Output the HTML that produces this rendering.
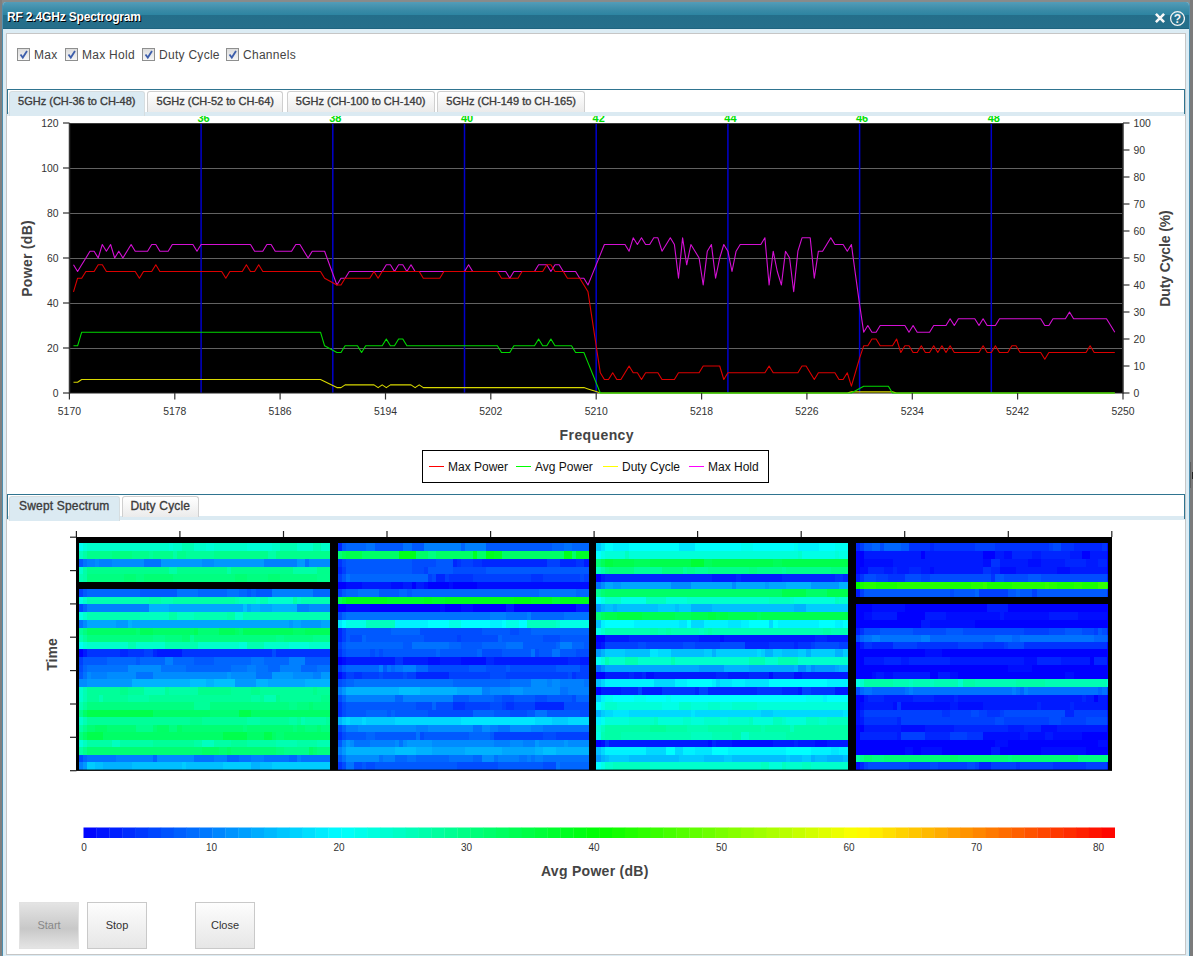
<!DOCTYPE html><html><head><meta charset="utf-8"><style>
*{box-sizing:border-box}
html,body{margin:0;padding:0}
body{width:1196px;height:956px;overflow:hidden;background:#fff;position:relative;font-family:"Liberation Sans",sans-serif}
.abs{position:absolute}
#strTop{left:0;top:0;width:1193px;height:8px;background:#878b8b}
#strL{left:0;top:0;width:2px;height:956px;background:#7f7f7f}
#strR{left:1190px;top:0;width:3px;height:956px;background:#7b7b7b}
#dlg{left:2px;top:2px;width:1188px;height:960px;background:#dcecf4;border-left:1px solid #4d8fb0;border-right:1px solid #4d8fb0;border-radius:4px 4px 0 0;overflow:hidden}
#tbar{left:0;top:0;width:1186px;height:26.5px;background:linear-gradient(#539cb8 0px,#3a8ba7 8px,#2e85a2 12.5px,#246e8a 13px,#266f8b 25.5px,#1f6480 26.5px)}
#ttl{left:4px;top:8px;color:#fff;font-weight:bold;font-size:12px;text-shadow:1px 1px 0 #000;white-space:nowrap;letter-spacing:-0.17px}
#content{left:6px;top:33px;width:1180px;height:922px;background:#fff;border:1px solid #c6c6c6}
.cbx{position:absolute;top:48px;width:13px;height:13px;border:1px solid #8e8f8f;background:linear-gradient(#dcdcdc,#f6f6f6)}
.cbl{position:absolute;top:47.5px;font-size:12px;color:#444;white-space:nowrap;letter-spacing:0.28px}
.tabbar{position:absolute;left:7px;width:1178px;height:25px;border:1px solid #2f7490;border-bottom:none}
.tabstrip{position:absolute;left:7px;width:1178px;height:4px;background:#dbeaf2}
.tab{position:absolute;height:21px;border:1px solid #cfcfcf;border-bottom:none;border-radius:3px 3px 0 0;background:linear-gradient(#ffffff,#ebebeb);font-size:11px;font-weight:normal;-webkit-text-stroke:0.35px #3c3c3c;color:#3c3c3c;white-space:nowrap;padding-top:3px;text-align:center}
.tab.act{background:#dbeaf2;border-color:#d6dde0;height:25px}
.btn{position:absolute;top:902px;width:60px;height:47px;border:1px solid #c9c9c9;background:linear-gradient(#fdfdfd,#e6e6e6);font-size:11px;color:#333;text-align:center;line-height:45px}
.btn.dis{background:linear-gradient(#e4e4e4,#c8c8c8 57%,#e4e4e4);color:#888;border-color:#e2e2e2}
#ch{position:absolute;left:0;top:0}
#ch text{font-family:"Liberation Sans",sans-serif}
.ax{font-size:10.4px;fill:#333}
.cb{font-size:10px;fill:#333}
.chl{font-size:11px;font-weight:bold;fill:#00e000}
.ttl{font-size:14px;font-weight:bold;fill:#444}
.lg{font-size:12px;fill:#111}
</style></head><body><div class="abs" id="strTop"></div><div class="abs" id="strL"></div><div class="abs" id="strR"></div><div class="abs" id="dlg"><div class="abs" id="tbar"><div class="abs" id="ttl">RF 2.4GHz Spectrogram</div><svg class="abs" style="left:1150px;top:7px" width="32" height="20"><path d="M2.9 4.9 L11.1 13.1 M11.1 4.9 L2.9 13.1" stroke="#f6f6f6" stroke-width="2.6"/><circle cx="24.5" cy="9.5" r="6.9" fill="none" stroke="#f2f2f2" stroke-width="1.3"/><text x="24.5" y="14.3" text-anchor="middle" font-family="Liberation Sans" font-weight="bold" font-size="12" fill="#f4f4f4">?</text></svg></div></div><div class="abs" id="content"></div><div class="abs" style="left:1190px;top:462px;width:1px;height:26px;background:#5f5f5f"></div><div class="abs" style="left:1192px;top:472px;width:1px;height:7px;background:#222"></div><div class="cbx" style="left:17px"><svg width="13" height="13" style="position:absolute;left:-1px;top:-1px"><path d="M3.5 6.5 L5.8 9.6 L10 3" fill="none" stroke="#3d5eab" stroke-width="1.8"/></svg></div><div class="cbl" style="left:34px">Max</div><div class="cbx" style="left:65px"><svg width="13" height="13" style="position:absolute;left:-1px;top:-1px"><path d="M3.5 6.5 L5.8 9.6 L10 3" fill="none" stroke="#3d5eab" stroke-width="1.8"/></svg></div><div class="cbl" style="left:82px">Max Hold</div><div class="cbx" style="left:142px"><svg width="13" height="13" style="position:absolute;left:-1px;top:-1px"><path d="M3.5 6.5 L5.8 9.6 L10 3" fill="none" stroke="#3d5eab" stroke-width="1.8"/></svg></div><div class="cbl" style="left:159px">Duty Cycle</div><div class="cbx" style="left:226px"><svg width="13" height="13" style="position:absolute;left:-1px;top:-1px"><path d="M3.5 6.5 L5.8 9.6 L10 3" fill="none" stroke="#3d5eab" stroke-width="1.8"/></svg></div><div class="cbl" style="left:243px">Channels</div><div class="tabstrip" style="top:111.5px"></div><div class="tabbar" style="top:89px"></div><div class="tab act" style="left:9px;top:91px;width:135.5px">5GHz (CH-36 to CH-48)</div><div class="tab" style="left:147.2px;top:91px;width:136.2px">5GHz (CH-52 to CH-64)</div><div class="tab" style="left:286.7px;top:91px;width:147.9px">5GHz (CH-100 to CH-140)</div><div class="tab" style="left:437.3px;top:91px;width:147.7px">5GHz (CH-149 to CH-165)</div><div class="tabstrip" style="top:516.3px"></div><div class="tabbar" style="top:494px"></div><div class="tab act" style="left:9px;top:496px;width:110.6px;font-size:12px;letter-spacing:0.17px;padding-top:2px">Swept Spectrum</div><div class="tab" style="left:122px;top:496px;width:76.6px;font-size:12px;letter-spacing:0.17px;padding-top:2px">Duty Cycle</div><svg id="ch" width="1196" height="956"><clipPath id="clipch"><rect x="60" y="116" width="1000" height="7"/></clipPath><g clip-path="url(#clipch)"><text x="203.6" y="122.3" class="chl" text-anchor="middle">36</text><text x="335.3" y="122.3" class="chl" text-anchor="middle">38</text><text x="467.0" y="122.3" class="chl" text-anchor="middle">40</text><text x="598.7" y="122.3" class="chl" text-anchor="middle">42</text><text x="730.4" y="122.3" class="chl" text-anchor="middle">44</text><text x="862.1" y="122.3" class="chl" text-anchor="middle">46</text><text x="993.8" y="122.3" class="chl" text-anchor="middle">48</text></g><rect x="69" y="123" width="1054" height="270" fill="#000"/><line x1="69" y1="348.5" x2="1122" y2="348.5" stroke="#626262" stroke-width="1"/><line x1="69" y1="303.5" x2="1122" y2="303.5" stroke="#626262" stroke-width="1"/><line x1="69" y1="258.5" x2="1122" y2="258.5" stroke="#626262" stroke-width="1"/><line x1="69" y1="213.5" x2="1122" y2="213.5" stroke="#626262" stroke-width="1"/><line x1="69" y1="168.5" x2="1122" y2="168.5" stroke="#626262" stroke-width="1"/><line x1="201.1" y1="123" x2="201.1" y2="393" stroke="#0000cc" stroke-width="1.5"/><line x1="332.8" y1="123" x2="332.8" y2="393" stroke="#0000cc" stroke-width="1.5"/><line x1="464.5" y1="123" x2="464.5" y2="393" stroke="#0000cc" stroke-width="1.5"/><line x1="596.2" y1="123" x2="596.2" y2="393" stroke="#0000cc" stroke-width="1.5"/><line x1="727.9" y1="123" x2="727.9" y2="393" stroke="#0000cc" stroke-width="1.5"/><line x1="859.6" y1="123" x2="859.6" y2="393" stroke="#0000cc" stroke-width="1.5"/><line x1="991.3" y1="123" x2="991.3" y2="393" stroke="#0000cc" stroke-width="1.5"/><rect x="69" y="123" width="1054" height="1" fill="#3a3a3a"/><line x1="69" y1="393" x2="1123.5" y2="393" stroke="#222" stroke-width="1.2"/><polyline fill="none" stroke="#d8d800" stroke-width="1.1" stroke-linejoin="round" points="73.5,382.2 77.6,382.2 81.7,379.5 85.9,379.5 90.0,379.5 94.1,379.5 98.2,379.5 102.3,379.5 106.4,379.5 110.6,379.5 114.7,379.5 118.8,379.5 122.9,379.5 127.0,379.5 131.1,379.5 135.2,379.5 139.4,379.5 143.5,379.5 147.6,379.5 151.7,379.5 155.8,379.5 159.9,379.5 164.1,379.5 168.2,379.5 172.3,379.5 176.4,379.5 180.5,379.5 184.6,379.5 188.8,379.5 192.9,379.5 197.0,379.5 201.1,379.5 205.2,379.5 209.3,379.5 213.4,379.5 217.6,379.5 221.7,379.5 225.8,379.5 229.9,379.5 234.0,379.5 238.1,379.5 242.3,379.5 246.4,379.5 250.5,379.5 254.6,379.5 258.7,379.5 262.8,379.5 266.9,379.5 271.1,379.5 275.2,379.5 279.3,379.5 283.4,379.5 287.5,379.5 291.6,379.5 295.8,379.5 299.9,379.5 304.0,379.5 308.1,379.5 312.2,379.5 316.3,379.5 320.5,379.5 324.6,381.5 328.7,383.6 332.8,385.6 336.9,387.6 341.0,387.6 345.1,384.9 349.3,384.9 353.4,384.9 357.5,384.9 361.6,384.9 365.7,384.9 369.8,384.9 374.0,384.9 378.1,387.6 382.2,384.9 386.3,387.6 390.4,384.9 394.5,384.9 398.6,384.9 402.8,384.9 406.9,384.9 411.0,384.9 415.1,387.6 419.2,384.9 423.3,387.6 427.5,387.6 431.6,387.6 435.7,387.6 439.8,387.6 443.9,387.6 448.0,387.6 452.2,387.6 456.3,387.6 460.4,387.6 464.5,387.6 468.6,387.6 472.7,387.6 476.8,387.6 481.0,387.6 485.1,387.6 489.2,387.6 493.3,387.6 497.4,387.6 501.5,387.6 505.7,387.6 509.8,387.6 513.9,387.6 518.0,387.6 522.1,387.6 526.2,387.6 530.3,387.6 534.5,387.6 538.6,387.6 542.7,387.6 546.8,387.6 550.9,387.6 555.0,387.6 559.2,387.6 563.3,387.6 567.4,387.6 571.5,387.6 575.6,387.6 579.7,387.6 583.9,387.6 588.0,388.9 592.1,390.3 596.2,391.6 600.3,393.0 604.4,393.0 608.5,393.0 612.7,393.0 616.8,393.0 620.9,393.0 625.0,393.0 629.1,393.0 633.2,393.0 637.4,393.0 641.5,393.0 645.6,393.0 649.7,393.0 653.8,393.0 657.9,393.0 662.0,393.0 666.2,393.0 670.3,393.0 674.4,393.0 678.5,393.0 682.6,393.0 686.7,393.0 690.9,393.0 695.0,393.0 699.1,393.0 703.2,393.0 707.3,393.0 711.4,393.0 715.6,393.0 719.7,393.0 723.8,393.0 727.9,393.0 732.0,393.0 736.1,393.0 740.2,393.0 744.4,393.0 748.5,393.0 752.6,393.0 756.7,393.0 760.8,393.0 764.9,393.0 769.1,393.0 773.2,393.0 777.3,393.0 781.4,393.0 785.5,393.0 789.6,393.0 793.7,393.0 797.9,393.0 802.0,393.0 806.1,393.0 810.2,393.0 814.3,393.0 818.4,393.0 822.6,393.0 826.7,393.0 830.8,393.0 834.9,393.0 839.0,393.0 843.1,393.0 847.3,393.0 851.4,391.9 855.5,391.9 859.6,391.9 863.7,391.9 867.8,391.9 871.9,391.9 876.1,391.9 880.2,391.9 884.3,391.9 888.4,391.9 892.5,391.9 896.6,393.0 900.8,393.0 904.9,393.0 909.0,393.0 913.1,393.0 917.2,393.0 921.3,393.0 925.4,393.0 929.6,393.0 933.7,393.0 937.8,393.0 941.9,393.0 946.0,393.0 950.1,393.0 954.3,393.0 958.4,393.0 962.5,393.0 966.6,393.0 970.7,393.0 974.8,393.0 979.0,393.0 983.1,393.0 987.2,393.0 991.3,393.0 995.4,393.0 999.5,393.0 1003.6,393.0 1007.8,393.0 1011.9,393.0 1016.0,393.0 1020.1,393.0 1024.2,393.0 1028.3,393.0 1032.5,393.0 1036.6,393.0 1040.7,393.0 1044.8,393.0 1048.9,393.0 1053.0,393.0 1057.1,393.0 1061.3,393.0 1065.4,393.0 1069.5,393.0 1073.6,393.0 1077.7,393.0 1081.8,393.0 1086.0,393.0 1090.1,393.0 1094.2,393.0 1098.3,393.0 1102.4,393.0 1106.5,393.0 1110.7,393.0 1114.8,393.0"/><polyline fill="none" stroke="#00d800" stroke-width="1.1" stroke-linejoin="round" points="73.5,345.8 77.6,345.8 81.7,332.2 85.9,332.2 90.0,332.2 94.1,332.2 98.2,332.2 102.3,332.2 106.4,332.2 110.6,332.2 114.7,332.2 118.8,332.2 122.9,332.2 127.0,332.2 131.1,332.2 135.2,332.2 139.4,332.2 143.5,332.2 147.6,332.2 151.7,332.2 155.8,332.2 159.9,332.2 164.1,332.2 168.2,332.2 172.3,332.2 176.4,332.2 180.5,332.2 184.6,332.2 188.8,332.2 192.9,332.2 197.0,332.2 201.1,332.2 205.2,332.2 209.3,332.2 213.4,332.2 217.6,332.2 221.7,332.2 225.8,332.2 229.9,332.2 234.0,332.2 238.1,332.2 242.3,332.2 246.4,332.2 250.5,332.2 254.6,332.2 258.7,332.2 262.8,332.2 266.9,332.2 271.1,332.2 275.2,332.2 279.3,332.2 283.4,332.2 287.5,332.2 291.6,332.2 295.8,332.2 299.9,332.2 304.0,332.2 308.1,332.2 312.2,332.2 316.3,332.2 320.5,332.2 324.6,345.8 328.7,348.0 332.8,350.2 336.9,352.5 341.0,352.5 345.1,345.8 349.3,345.8 353.4,345.8 357.5,345.8 361.6,352.5 365.7,345.8 369.8,345.8 374.0,345.8 378.1,345.8 382.2,345.8 386.3,339.0 390.4,345.8 394.5,345.8 398.6,339.0 402.8,339.0 406.9,345.8 411.0,345.8 415.1,345.8 419.2,345.8 423.3,345.8 427.5,345.8 431.6,345.8 435.7,345.8 439.8,345.8 443.9,345.8 448.0,345.8 452.2,345.8 456.3,345.8 460.4,345.8 464.5,345.8 468.6,345.8 472.7,345.8 476.8,345.8 481.0,345.8 485.1,345.8 489.2,345.8 493.3,345.8 497.4,345.8 501.5,352.5 505.7,352.5 509.8,352.5 513.9,345.8 518.0,345.8 522.1,345.8 526.2,345.8 530.3,345.8 534.5,345.8 538.6,339.0 542.7,345.8 546.8,345.8 550.9,339.0 555.0,345.8 559.2,345.8 563.3,345.8 567.4,345.8 571.5,345.8 575.6,352.5 579.7,352.5 583.9,352.5 588.0,362.6 592.1,372.8 596.2,382.9 600.3,393.0 604.4,393.0 608.5,393.0 612.7,393.0 616.8,393.0 620.9,393.0 625.0,393.0 629.1,393.0 633.2,393.0 637.4,393.0 641.5,393.0 645.6,393.0 649.7,393.0 653.8,393.0 657.9,393.0 662.0,393.0 666.2,393.0 670.3,393.0 674.4,393.0 678.5,393.0 682.6,393.0 686.7,393.0 690.9,393.0 695.0,393.0 699.1,393.0 703.2,393.0 707.3,393.0 711.4,393.0 715.6,393.0 719.7,393.0 723.8,393.0 727.9,393.0 732.0,393.0 736.1,393.0 740.2,393.0 744.4,393.0 748.5,393.0 752.6,393.0 756.7,393.0 760.8,393.0 764.9,393.0 769.1,393.0 773.2,393.0 777.3,393.0 781.4,393.0 785.5,393.0 789.6,393.0 793.7,393.0 797.9,393.0 802.0,393.0 806.1,393.0 810.2,393.0 814.3,393.0 818.4,393.0 822.6,393.0 826.7,393.0 830.8,393.0 834.9,393.0 839.0,393.0 843.1,393.0 847.3,393.0 851.4,393.0 855.5,390.8 859.6,388.5 863.7,386.2 867.8,386.2 871.9,386.2 876.1,386.2 880.2,386.2 884.3,386.2 888.4,386.2 892.5,393.0 896.6,393.0 900.8,393.0 904.9,393.0 909.0,393.0 913.1,393.0 917.2,393.0 921.3,393.0 925.4,393.0 929.6,393.0 933.7,393.0 937.8,393.0 941.9,393.0 946.0,393.0 950.1,393.0 954.3,393.0 958.4,393.0 962.5,393.0 966.6,393.0 970.7,393.0 974.8,393.0 979.0,393.0 983.1,393.0 987.2,393.0 991.3,393.0 995.4,393.0 999.5,393.0 1003.6,393.0 1007.8,393.0 1011.9,393.0 1016.0,393.0 1020.1,393.0 1024.2,393.0 1028.3,393.0 1032.5,393.0 1036.6,393.0 1040.7,393.0 1044.8,393.0 1048.9,393.0 1053.0,393.0 1057.1,393.0 1061.3,393.0 1065.4,393.0 1069.5,393.0 1073.6,393.0 1077.7,393.0 1081.8,393.0 1086.0,393.0 1090.1,393.0 1094.2,393.0 1098.3,393.0 1102.4,393.0 1106.5,393.0 1110.7,393.0 1114.8,393.0"/><polyline fill="none" stroke="#d410d4" stroke-width="1.1" stroke-linejoin="round" points="73.5,264.8 77.6,271.5 81.7,264.8 85.9,258.0 90.0,251.2 94.1,251.2 98.2,258.0 102.3,244.5 106.4,251.2 110.6,244.5 114.7,258.0 118.8,251.2 122.9,258.0 127.0,251.2 131.1,244.5 135.2,251.2 139.4,251.2 143.5,251.2 147.6,251.2 151.7,244.5 155.8,244.5 159.9,251.2 164.1,251.2 168.2,251.2 172.3,244.5 176.4,244.5 180.5,244.5 184.6,244.5 188.8,244.5 192.9,244.5 197.0,251.2 201.1,244.5 205.2,244.5 209.3,244.5 213.4,244.5 217.6,244.5 221.7,244.5 225.8,244.5 229.9,244.5 234.0,244.5 238.1,244.5 242.3,244.5 246.4,244.5 250.5,244.5 254.6,251.2 258.7,251.2 262.8,251.2 266.9,244.5 271.1,244.5 275.2,251.2 279.3,251.2 283.4,251.2 287.5,251.2 291.6,251.2 295.8,244.5 299.9,244.5 304.0,251.2 308.1,258.0 312.2,251.2 316.3,251.2 320.5,251.2 324.6,251.2 328.7,262.5 332.8,273.8 336.9,285.0 341.0,278.2 345.1,278.2 349.3,271.5 353.4,271.5 357.5,271.5 361.6,271.5 365.7,271.5 369.8,271.5 374.0,271.5 378.1,271.5 382.2,271.5 386.3,264.8 390.4,264.8 394.5,271.5 398.6,264.8 402.8,264.8 406.9,271.5 411.0,264.8 415.1,271.5 419.2,271.5 423.3,271.5 427.5,271.5 431.6,271.5 435.7,271.5 439.8,271.5 443.9,271.5 448.0,271.5 452.2,271.5 456.3,271.5 460.4,271.5 464.5,271.5 468.6,264.8 472.7,271.5 476.8,271.5 481.0,271.5 485.1,271.5 489.2,271.5 493.3,271.5 497.4,271.5 501.5,271.5 505.7,271.5 509.8,278.2 513.9,271.5 518.0,271.5 522.1,271.5 526.2,271.5 530.3,271.5 534.5,271.5 538.6,264.8 542.7,264.8 546.8,264.8 550.9,271.5 555.0,264.8 559.2,264.8 563.3,271.5 567.4,271.5 571.5,271.5 575.6,271.5 579.7,278.2 583.9,278.2 588.0,285.0 592.1,274.9 596.2,264.8 600.3,254.6 604.4,244.5 608.5,244.5 612.7,244.5 616.8,244.5 620.9,244.5 625.0,244.5 629.1,251.2 633.2,237.8 637.4,244.5 641.5,237.8 645.6,244.5 649.7,244.5 653.8,237.8 657.9,237.8 662.0,251.2 666.2,244.5 670.3,237.8 674.4,244.5 678.5,278.2 682.6,237.8 686.7,264.8 690.9,244.5 695.0,251.2 699.1,258.0 703.2,285.0 707.3,251.2 711.4,244.5 715.6,278.2 719.7,258.0 723.8,244.5 727.9,251.2 732.0,271.5 736.1,251.2 740.2,244.5 744.4,244.5 748.5,244.5 752.6,244.5 756.7,244.5 760.8,244.5 764.9,237.8 769.1,285.0 773.2,251.2 777.3,271.5 781.4,285.0 785.5,251.2 789.6,258.0 793.7,291.8 797.9,251.2 802.0,237.8 806.1,237.8 810.2,237.8 814.3,278.2 818.4,251.2 822.6,251.2 826.7,244.5 830.8,237.8 834.9,244.5 839.0,244.5 843.1,244.5 847.3,251.2 851.4,244.5 855.5,274.9 859.6,304.6 863.7,332.2 867.8,325.5 871.9,332.2 876.1,332.2 880.2,325.5 884.3,325.5 888.4,325.5 892.5,325.5 896.6,325.5 900.8,325.5 904.9,325.5 909.0,332.2 913.1,325.5 917.2,332.2 921.3,332.2 925.4,332.2 929.6,332.2 933.7,325.5 937.8,325.5 941.9,325.5 946.0,325.5 950.1,318.8 954.3,325.5 958.4,318.8 962.5,318.8 966.6,318.8 970.7,318.8 974.8,318.8 979.0,325.5 983.1,318.8 987.2,325.5 991.3,325.5 995.4,325.5 999.5,318.8 1003.6,318.8 1007.8,318.8 1011.9,318.8 1016.0,318.8 1020.1,318.8 1024.2,318.8 1028.3,318.8 1032.5,318.8 1036.6,318.8 1040.7,318.8 1044.8,325.5 1048.9,325.5 1053.0,318.8 1057.1,318.8 1061.3,318.8 1065.4,318.8 1069.5,312.0 1073.6,318.8 1077.7,318.8 1081.8,318.8 1086.0,318.8 1090.1,318.8 1094.2,318.8 1098.3,318.8 1102.4,318.8 1106.5,318.8 1110.7,325.5 1114.8,332.2"/><polyline fill="none" stroke="#dc0000" stroke-width="1.1" stroke-linejoin="round" points="73.5,291.8 77.6,278.2 81.7,278.2 85.9,271.5 90.0,271.5 94.1,271.5 98.2,264.8 102.3,264.8 106.4,271.5 110.6,271.5 114.7,271.5 118.8,271.5 122.9,271.5 127.0,271.5 131.1,271.5 135.2,271.5 139.4,278.2 143.5,271.5 147.6,271.5 151.7,271.5 155.8,264.8 159.9,271.5 164.1,271.5 168.2,271.5 172.3,271.5 176.4,271.5 180.5,271.5 184.6,271.5 188.8,271.5 192.9,271.5 197.0,271.5 201.1,271.5 205.2,271.5 209.3,271.5 213.4,271.5 217.6,271.5 221.7,271.5 225.8,278.2 229.9,271.5 234.0,271.5 238.1,271.5 242.3,271.5 246.4,264.8 250.5,271.5 254.6,271.5 258.7,264.8 262.8,271.5 266.9,271.5 271.1,271.5 275.2,271.5 279.3,271.5 283.4,271.5 287.5,271.5 291.6,271.5 295.8,271.5 299.9,271.5 304.0,271.5 308.1,271.5 312.2,271.5 316.3,271.5 320.5,271.5 324.6,278.2 328.7,280.5 332.8,282.8 336.9,285.0 341.0,285.0 345.1,278.2 349.3,278.2 353.4,278.2 357.5,278.2 361.6,278.2 365.7,278.2 369.8,278.2 374.0,271.5 378.1,278.2 382.2,271.5 386.3,271.5 390.4,271.5 394.5,271.5 398.6,271.5 402.8,271.5 406.9,271.5 411.0,271.5 415.1,271.5 419.2,271.5 423.3,278.2 427.5,278.2 431.6,278.2 435.7,278.2 439.8,278.2 443.9,271.5 448.0,271.5 452.2,271.5 456.3,271.5 460.4,271.5 464.5,271.5 468.6,271.5 472.7,271.5 476.8,271.5 481.0,271.5 485.1,271.5 489.2,271.5 493.3,271.5 497.4,271.5 501.5,278.2 505.7,278.2 509.8,278.2 513.9,278.2 518.0,278.2 522.1,271.5 526.2,271.5 530.3,271.5 534.5,271.5 538.6,271.5 542.7,271.5 546.8,264.8 550.9,264.8 555.0,271.5 559.2,271.5 563.3,271.5 567.4,278.2 571.5,278.2 575.6,278.2 579.7,278.2 583.9,285.0 588.0,291.8 592.1,318.8 596.2,345.8 600.3,372.8 604.4,379.5 608.5,379.5 612.7,372.8 616.8,379.5 620.9,379.5 625.0,372.8 629.1,366.0 633.2,372.8 637.4,372.8 641.5,379.5 645.6,372.8 649.7,372.8 653.8,372.8 657.9,372.8 662.0,379.5 666.2,379.5 670.3,379.5 674.4,379.5 678.5,372.8 682.6,372.8 686.7,372.8 690.9,372.8 695.0,372.8 699.1,372.8 703.2,366.0 707.3,366.0 711.4,366.0 715.6,366.0 719.7,366.0 723.8,379.5 727.9,372.8 732.0,372.8 736.1,372.8 740.2,372.8 744.4,372.8 748.5,372.8 752.6,372.8 756.7,372.8 760.8,372.8 764.9,372.8 769.1,366.0 773.2,372.8 777.3,372.8 781.4,372.8 785.5,372.8 789.6,372.8 793.7,372.8 797.9,372.8 802.0,366.0 806.1,366.0 810.2,372.8 814.3,379.5 818.4,372.8 822.6,372.8 826.7,372.8 830.8,372.8 834.9,372.8 839.0,379.5 843.1,379.5 847.3,372.8 851.4,386.2 855.5,372.1 859.6,358.1 863.7,345.8 867.8,345.8 871.9,339.0 876.1,339.0 880.2,345.8 884.3,345.8 888.4,345.8 892.5,345.8 896.6,339.0 900.8,352.5 904.9,345.8 909.0,345.8 913.1,352.5 917.2,352.5 921.3,345.8 925.4,352.5 929.6,352.5 933.7,345.8 937.8,352.5 941.9,345.8 946.0,352.5 950.1,345.8 954.3,352.5 958.4,352.5 962.5,352.5 966.6,352.5 970.7,352.5 974.8,352.5 979.0,352.5 983.1,345.8 987.2,352.5 991.3,352.5 995.4,345.8 999.5,352.5 1003.6,352.5 1007.8,352.5 1011.9,345.8 1016.0,345.8 1020.1,352.5 1024.2,352.5 1028.3,352.5 1032.5,352.5 1036.6,352.5 1040.7,352.5 1044.8,359.2 1048.9,352.5 1053.0,352.5 1057.1,352.5 1061.3,352.5 1065.4,352.5 1069.5,352.5 1073.6,352.5 1077.7,352.5 1081.8,352.5 1086.0,352.5 1090.1,345.8 1094.2,352.5 1098.3,352.5 1102.4,352.5 1106.5,352.5 1110.7,352.5 1114.8,352.5"/><line x1="69.5" y1="123" x2="69.5" y2="393.5" stroke="#333" stroke-width="1.5"/><line x1="1123" y1="123" x2="1123" y2="393.5" stroke="#333" stroke-width="1.5"/><line x1="63" y1="393.0" x2="69.5" y2="393.0" stroke="#333" stroke-width="1.2"/><text x="58.5" y="396.6" class="ax" text-anchor="end">0</text><line x1="63" y1="348.0" x2="69.5" y2="348.0" stroke="#333" stroke-width="1.2"/><text x="58.5" y="351.6" class="ax" text-anchor="end">20</text><line x1="63" y1="303.0" x2="69.5" y2="303.0" stroke="#333" stroke-width="1.2"/><text x="58.5" y="306.6" class="ax" text-anchor="end">40</text><line x1="63" y1="258.0" x2="69.5" y2="258.0" stroke="#333" stroke-width="1.2"/><text x="58.5" y="261.6" class="ax" text-anchor="end">60</text><line x1="63" y1="213.0" x2="69.5" y2="213.0" stroke="#333" stroke-width="1.2"/><text x="58.5" y="216.6" class="ax" text-anchor="end">80</text><line x1="63" y1="168.0" x2="69.5" y2="168.0" stroke="#333" stroke-width="1.2"/><text x="58.5" y="171.6" class="ax" text-anchor="end">100</text><line x1="63" y1="123.0" x2="69.5" y2="123.0" stroke="#333" stroke-width="1.2"/><text x="58.5" y="126.6" class="ax" text-anchor="end">120</text><line x1="1123" y1="393.0" x2="1129.5" y2="393.0" stroke="#333" stroke-width="1.2"/><text x="1133.5" y="396.6" class="ax">0</text><line x1="1123" y1="366.0" x2="1129.5" y2="366.0" stroke="#333" stroke-width="1.2"/><text x="1133.5" y="369.6" class="ax">10</text><line x1="1123" y1="339.0" x2="1129.5" y2="339.0" stroke="#333" stroke-width="1.2"/><text x="1133.5" y="342.6" class="ax">20</text><line x1="1123" y1="312.0" x2="1129.5" y2="312.0" stroke="#333" stroke-width="1.2"/><text x="1133.5" y="315.6" class="ax">30</text><line x1="1123" y1="285.0" x2="1129.5" y2="285.0" stroke="#333" stroke-width="1.2"/><text x="1133.5" y="288.6" class="ax">40</text><line x1="1123" y1="258.0" x2="1129.5" y2="258.0" stroke="#333" stroke-width="1.2"/><text x="1133.5" y="261.6" class="ax">50</text><line x1="1123" y1="231.0" x2="1129.5" y2="231.0" stroke="#333" stroke-width="1.2"/><text x="1133.5" y="234.6" class="ax">60</text><line x1="1123" y1="204.0" x2="1129.5" y2="204.0" stroke="#333" stroke-width="1.2"/><text x="1133.5" y="207.6" class="ax">70</text><line x1="1123" y1="177.0" x2="1129.5" y2="177.0" stroke="#333" stroke-width="1.2"/><text x="1133.5" y="180.6" class="ax">80</text><line x1="1123" y1="150.0" x2="1129.5" y2="150.0" stroke="#333" stroke-width="1.2"/><text x="1133.5" y="153.6" class="ax">90</text><line x1="1123" y1="123.0" x2="1129.5" y2="123.0" stroke="#333" stroke-width="1.2"/><text x="1133.5" y="126.6" class="ax">100</text><line x1="69.4" y1="393" x2="69.4" y2="399.5" stroke="#333" stroke-width="1.2"/><text x="69.4" y="415" class="ax" text-anchor="middle">5170</text><line x1="174.8" y1="393" x2="174.8" y2="399.5" stroke="#333" stroke-width="1.2"/><text x="174.8" y="415" class="ax" text-anchor="middle">5178</text><line x1="280.1" y1="393" x2="280.1" y2="399.5" stroke="#333" stroke-width="1.2"/><text x="280.1" y="415" class="ax" text-anchor="middle">5186</text><line x1="385.5" y1="393" x2="385.5" y2="399.5" stroke="#333" stroke-width="1.2"/><text x="385.5" y="415" class="ax" text-anchor="middle">5194</text><line x1="490.8" y1="393" x2="490.8" y2="399.5" stroke="#333" stroke-width="1.2"/><text x="490.8" y="415" class="ax" text-anchor="middle">5202</text><line x1="596.2" y1="393" x2="596.2" y2="399.5" stroke="#333" stroke-width="1.2"/><text x="596.2" y="415" class="ax" text-anchor="middle">5210</text><line x1="701.6" y1="393" x2="701.6" y2="399.5" stroke="#333" stroke-width="1.2"/><text x="701.6" y="415" class="ax" text-anchor="middle">5218</text><line x1="806.9" y1="393" x2="806.9" y2="399.5" stroke="#333" stroke-width="1.2"/><text x="806.9" y="415" class="ax" text-anchor="middle">5226</text><line x1="912.3" y1="393" x2="912.3" y2="399.5" stroke="#333" stroke-width="1.2"/><text x="912.3" y="415" class="ax" text-anchor="middle">5234</text><line x1="1017.6" y1="393" x2="1017.6" y2="399.5" stroke="#333" stroke-width="1.2"/><text x="1017.6" y="415" class="ax" text-anchor="middle">5242</text><line x1="1123.0" y1="393" x2="1123.0" y2="399.5" stroke="#333" stroke-width="1.2"/><text x="1123.0" y="415" class="ax" text-anchor="middle">5250</text><text x="596.6" y="440" class="ttl" text-anchor="middle" textLength="74" lengthAdjust="spacing">Frequency</text><text transform="translate(32.2,258.5) rotate(-90)" class="ttl" text-anchor="middle" textLength="76.5" lengthAdjust="spacing">Power (dB)</text><text transform="translate(1169.9,258.5) rotate(-90)" class="ttl" text-anchor="middle" textLength="96.5" lengthAdjust="spacing">Duty Cycle (%)</text><rect x="422.5" y="450.5" width="346" height="32" fill="#fff" stroke="#000" stroke-width="1"/><line x1="429" y1="466.5" x2="444" y2="466.5" stroke="#ff0000" stroke-width="1"/><text x="448" y="470.5" class="lg">Max Power</text><line x1="516" y1="466.5" x2="531" y2="466.5" stroke="#00ff00" stroke-width="1"/><text x="535" y="470.5" class="lg">Avg Power</text><line x1="603" y1="466.5" x2="618" y2="466.5" stroke="#ffff00" stroke-width="1"/><text x="622" y="470.5" class="lg">Duty Cycle</text><line x1="689" y1="466.5" x2="704" y2="466.5" stroke="#ff00ff" stroke-width="1"/><text x="708" y="470.5" class="lg">Max Hold</text><rect x="76" y="537" width="1036" height="233.5" fill="#000"/><g shape-rendering="crispEdges"><rect x="79" y="543" width="4" height="8" fill="#00fff2"/><rect x="83" y="543" width="4" height="8" fill="#00ffd9"/><rect x="87" y="543" width="82" height="8" fill="#00ffcc"/><rect x="169" y="543" width="4" height="8" fill="#00ffd9"/><rect x="173" y="543" width="9" height="8" fill="#00ffcc"/><rect x="182" y="543" width="12" height="8" fill="#00ffb2"/><rect x="194" y="543" width="12" height="8" fill="#00ffcc"/><rect x="206" y="543" width="8" height="8" fill="#00ffd9"/><rect x="214" y="543" width="33" height="8" fill="#00ffcc"/><rect x="247" y="543" width="25" height="8" fill="#00ffd9"/><rect x="272" y="543" width="8" height="8" fill="#00ffcc"/><rect x="280" y="543" width="17" height="8" fill="#00ffb2"/><rect x="297" y="543" width="16" height="8" fill="#00ffcc"/><rect x="313" y="543" width="8" height="8" fill="#00ffb2"/><rect x="321" y="543" width="9" height="8" fill="#00ffcc"/><rect x="330" y="543" width="0" height="8" fill="#00ffe6"/><rect x="79" y="551" width="4" height="8" fill="#00ffbf"/><rect x="83" y="551" width="4" height="8" fill="#00ffa6"/><rect x="87" y="551" width="25" height="8" fill="#00ff8c"/><rect x="112" y="551" width="20" height="8" fill="#00ff80"/><rect x="132" y="551" width="17" height="8" fill="#00ff8c"/><rect x="149" y="551" width="4" height="8" fill="#00ff99"/><rect x="153" y="551" width="20" height="8" fill="#00ff8c"/><rect x="173" y="551" width="4" height="8" fill="#00ffa6"/><rect x="177" y="551" width="9" height="8" fill="#00ff8c"/><rect x="186" y="551" width="28" height="8" fill="#00ff99"/><rect x="214" y="551" width="54" height="8" fill="#00ff8c"/><rect x="268" y="551" width="8" height="8" fill="#00ffa6"/><rect x="276" y="551" width="54" height="8" fill="#00ff8c"/><rect x="330" y="551" width="0" height="8" fill="#00ffbf"/><rect x="79" y="559" width="4" height="8" fill="#0059ff"/><rect x="83" y="559" width="4" height="8" fill="#0073ff"/><rect x="87" y="559" width="8" height="8" fill="#0080ff"/><rect x="95" y="559" width="4" height="8" fill="#008cff"/><rect x="99" y="559" width="13" height="8" fill="#0080ff"/><rect x="112" y="559" width="32" height="8" fill="#008cff"/><rect x="144" y="559" width="17" height="8" fill="#0073ff"/><rect x="161" y="559" width="41" height="8" fill="#0099ff"/><rect x="202" y="559" width="12" height="8" fill="#008cff"/><rect x="214" y="559" width="50" height="8" fill="#0099ff"/><rect x="264" y="559" width="33" height="8" fill="#0080ff"/><rect x="297" y="559" width="8" height="8" fill="#0099ff"/><rect x="305" y="559" width="4" height="8" fill="#0073ff"/><rect x="309" y="559" width="21" height="8" fill="#008cff"/><rect x="330" y="559" width="0" height="8" fill="#0066ff"/><rect x="79" y="567" width="4" height="7" fill="#00ffcc"/><rect x="83" y="567" width="4" height="7" fill="#00ffa6"/><rect x="87" y="567" width="82" height="7" fill="#00ff8c"/><rect x="169" y="567" width="8" height="7" fill="#00ffa6"/><rect x="177" y="567" width="50" height="7" fill="#00ff8c"/><rect x="227" y="567" width="4" height="7" fill="#00ffa6"/><rect x="231" y="567" width="62" height="7" fill="#00ff8c"/><rect x="293" y="567" width="24" height="7" fill="#00ffa6"/><rect x="317" y="567" width="13" height="7" fill="#00ff8c"/><rect x="330" y="567" width="0" height="7" fill="#00ffa6"/><rect x="79" y="574" width="4" height="8" fill="#00ffb2"/><rect x="83" y="574" width="4" height="8" fill="#00ffa6"/><rect x="87" y="574" width="37" height="8" fill="#00ff80"/><rect x="124" y="574" width="12" height="8" fill="#00ff73"/><rect x="136" y="574" width="8" height="8" fill="#00ff80"/><rect x="144" y="574" width="29" height="8" fill="#00ff73"/><rect x="173" y="574" width="62" height="8" fill="#00ff80"/><rect x="235" y="574" width="12" height="8" fill="#00ff73"/><rect x="247" y="574" width="21" height="8" fill="#00ff80"/><rect x="268" y="574" width="12" height="8" fill="#00ff73"/><rect x="280" y="574" width="37" height="8" fill="#00ff80"/><rect x="317" y="574" width="13" height="8" fill="#00ff8c"/><rect x="330" y="574" width="0" height="8" fill="#00ffb2"/><rect x="79" y="589" width="4" height="8" fill="#0040ff"/><rect x="83" y="589" width="4" height="8" fill="#0059ff"/><rect x="87" y="589" width="53" height="8" fill="#0066ff"/><rect x="140" y="589" width="37" height="8" fill="#0059ff"/><rect x="177" y="589" width="21" height="8" fill="#0073ff"/><rect x="198" y="589" width="29" height="8" fill="#0066ff"/><rect x="227" y="589" width="12" height="8" fill="#0073ff"/><rect x="239" y="589" width="8" height="8" fill="#0066ff"/><rect x="247" y="589" width="4" height="8" fill="#0059ff"/><rect x="251" y="589" width="5" height="8" fill="#0066ff"/><rect x="256" y="589" width="16" height="8" fill="#0059ff"/><rect x="272" y="589" width="41" height="8" fill="#0080ff"/><rect x="313" y="589" width="17" height="8" fill="#0066ff"/><rect x="330" y="589" width="0" height="8" fill="#0040ff"/><rect x="79" y="597" width="4" height="7" fill="#00ffe6"/><rect x="83" y="597" width="4" height="7" fill="#00ffcc"/><rect x="87" y="597" width="62" height="7" fill="#00ffb2"/><rect x="149" y="597" width="12" height="7" fill="#00ffa6"/><rect x="161" y="597" width="12" height="7" fill="#00ffb2"/><rect x="173" y="597" width="62" height="7" fill="#00ffa6"/><rect x="235" y="597" width="4" height="7" fill="#00ffb2"/><rect x="239" y="597" width="17" height="7" fill="#00ffbf"/><rect x="256" y="597" width="4" height="7" fill="#00ffcc"/><rect x="260" y="597" width="8" height="7" fill="#00ffb2"/><rect x="268" y="597" width="25" height="7" fill="#00ffcc"/><rect x="293" y="597" width="4" height="7" fill="#00ffa6"/><rect x="297" y="597" width="4" height="7" fill="#00ffbf"/><rect x="301" y="597" width="29" height="7" fill="#00ffb2"/><rect x="330" y="597" width="0" height="7" fill="#00fff2"/><rect x="79" y="604" width="4" height="8" fill="#004cff"/><rect x="83" y="604" width="4" height="8" fill="#0066ff"/><rect x="87" y="604" width="62" height="8" fill="#0080ff"/><rect x="149" y="604" width="20" height="8" fill="#00b2ff"/><rect x="169" y="604" width="74" height="8" fill="#00a6ff"/><rect x="243" y="604" width="4" height="8" fill="#00bfff"/><rect x="247" y="604" width="4" height="8" fill="#00a6ff"/><rect x="251" y="604" width="9" height="8" fill="#00b2ff"/><rect x="260" y="604" width="12" height="8" fill="#00a6ff"/><rect x="272" y="604" width="25" height="8" fill="#00b2ff"/><rect x="297" y="604" width="12" height="8" fill="#0080ff"/><rect x="309" y="604" width="21" height="8" fill="#008cff"/><rect x="330" y="604" width="0" height="8" fill="#0066ff"/><rect x="79" y="612" width="4" height="8" fill="#00ffe6"/><rect x="83" y="612" width="4" height="8" fill="#00ffcc"/><rect x="87" y="612" width="53" height="8" fill="#00ffb2"/><rect x="140" y="612" width="29" height="8" fill="#00ffbf"/><rect x="169" y="612" width="8" height="8" fill="#00ffa6"/><rect x="177" y="612" width="17" height="8" fill="#00ffbf"/><rect x="194" y="612" width="33" height="8" fill="#00ffb2"/><rect x="227" y="612" width="8" height="8" fill="#00ffa6"/><rect x="235" y="612" width="8" height="8" fill="#00ffcc"/><rect x="243" y="612" width="87" height="8" fill="#00ffb2"/><rect x="330" y="612" width="0" height="8" fill="#00ffd9"/><rect x="79" y="620" width="4" height="8" fill="#0073ff"/><rect x="83" y="620" width="4" height="8" fill="#008cff"/><rect x="87" y="620" width="29" height="8" fill="#00a6ff"/><rect x="116" y="620" width="12" height="8" fill="#0099ff"/><rect x="128" y="620" width="4" height="8" fill="#00b2ff"/><rect x="132" y="620" width="157" height="8" fill="#00a6ff"/><rect x="289" y="620" width="4" height="8" fill="#0099ff"/><rect x="293" y="620" width="8" height="8" fill="#00a6ff"/><rect x="301" y="620" width="20" height="8" fill="#0099ff"/><rect x="321" y="620" width="9" height="8" fill="#00a6ff"/><rect x="330" y="620" width="0" height="8" fill="#0080ff"/><rect x="79" y="628" width="4" height="7" fill="#00ff99"/><rect x="83" y="628" width="4" height="7" fill="#00ff80"/><rect x="87" y="628" width="49" height="7" fill="#00ff66"/><rect x="136" y="628" width="4" height="7" fill="#00ff73"/><rect x="140" y="628" width="13" height="7" fill="#00ff59"/><rect x="153" y="628" width="41" height="7" fill="#00ff66"/><rect x="194" y="628" width="4" height="7" fill="#00ff59"/><rect x="198" y="628" width="21" height="7" fill="#00ff73"/><rect x="219" y="628" width="16" height="7" fill="#00ff59"/><rect x="235" y="628" width="4" height="7" fill="#00ff66"/><rect x="239" y="628" width="4" height="7" fill="#00ff73"/><rect x="243" y="628" width="50" height="7" fill="#00ff59"/><rect x="293" y="628" width="12" height="7" fill="#00ff66"/><rect x="305" y="628" width="25" height="7" fill="#00ff59"/><rect x="330" y="628" width="0" height="7" fill="#00ff80"/><rect x="79" y="635" width="4" height="7" fill="#00ffb2"/><rect x="83" y="635" width="4" height="7" fill="#00ff99"/><rect x="87" y="635" width="66" height="7" fill="#00ff80"/><rect x="153" y="635" width="12" height="7" fill="#00ff8c"/><rect x="165" y="635" width="17" height="7" fill="#00ff80"/><rect x="182" y="635" width="8" height="7" fill="#00ff73"/><rect x="190" y="635" width="4" height="7" fill="#00ff99"/><rect x="194" y="635" width="82" height="7" fill="#00ff80"/><rect x="276" y="635" width="8" height="7" fill="#00ff8c"/><rect x="284" y="635" width="29" height="7" fill="#00ff80"/><rect x="313" y="635" width="17" height="7" fill="#00ff8c"/><rect x="330" y="635" width="0" height="7" fill="#00ffb2"/><rect x="79" y="642" width="4" height="7" fill="#00fff2"/><rect x="83" y="642" width="4" height="7" fill="#00ffd9"/><rect x="87" y="642" width="41" height="7" fill="#00ffcc"/><rect x="128" y="642" width="8" height="7" fill="#00ffb2"/><rect x="136" y="642" width="29" height="7" fill="#00ffcc"/><rect x="165" y="642" width="33" height="7" fill="#00ffb2"/><rect x="198" y="642" width="41" height="7" fill="#00ffcc"/><rect x="239" y="642" width="8" height="7" fill="#00ffd9"/><rect x="247" y="642" width="17" height="7" fill="#00ffb2"/><rect x="264" y="642" width="25" height="7" fill="#00ffcc"/><rect x="289" y="642" width="20" height="7" fill="#00ffd9"/><rect x="309" y="642" width="21" height="7" fill="#00ffcc"/><rect x="330" y="642" width="0" height="7" fill="#00ffe6"/><rect x="79" y="649" width="4" height="8" fill="#0000ff"/><rect x="83" y="649" width="4" height="8" fill="#001aff"/><rect x="87" y="649" width="33" height="8" fill="#0033ff"/><rect x="120" y="649" width="8" height="8" fill="#0026ff"/><rect x="128" y="649" width="16" height="8" fill="#0033ff"/><rect x="144" y="649" width="9" height="8" fill="#0040ff"/><rect x="153" y="649" width="4" height="8" fill="#0026ff"/><rect x="157" y="649" width="25" height="8" fill="#001aff"/><rect x="182" y="649" width="90" height="8" fill="#0033ff"/><rect x="272" y="649" width="4" height="8" fill="#004cff"/><rect x="276" y="649" width="54" height="8" fill="#0033ff"/><rect x="330" y="649" width="0" height="8" fill="#000dff"/><rect x="79" y="657" width="4" height="8" fill="#0040ff"/><rect x="83" y="657" width="24" height="8" fill="#0059ff"/><rect x="107" y="657" width="29" height="8" fill="#0066ff"/><rect x="136" y="657" width="4" height="8" fill="#0059ff"/><rect x="140" y="657" width="25" height="8" fill="#0066ff"/><rect x="165" y="657" width="8" height="8" fill="#0080ff"/><rect x="173" y="657" width="21" height="8" fill="#0066ff"/><rect x="194" y="657" width="20" height="8" fill="#0059ff"/><rect x="214" y="657" width="37" height="8" fill="#0066ff"/><rect x="251" y="657" width="13" height="8" fill="#0073ff"/><rect x="264" y="657" width="25" height="8" fill="#0066ff"/><rect x="289" y="657" width="16" height="8" fill="#0080ff"/><rect x="305" y="657" width="25" height="8" fill="#0059ff"/><rect x="330" y="657" width="0" height="8" fill="#0033ff"/><rect x="79" y="665" width="4" height="7" fill="#004cff"/><rect x="83" y="665" width="4" height="7" fill="#0066ff"/><rect x="87" y="665" width="41" height="7" fill="#0073ff"/><rect x="128" y="665" width="33" height="7" fill="#008cff"/><rect x="161" y="665" width="25" height="7" fill="#0073ff"/><rect x="186" y="665" width="45" height="7" fill="#0066ff"/><rect x="231" y="665" width="16" height="7" fill="#0073ff"/><rect x="247" y="665" width="9" height="7" fill="#0080ff"/><rect x="256" y="665" width="12" height="7" fill="#0073ff"/><rect x="268" y="665" width="12" height="7" fill="#0066ff"/><rect x="280" y="665" width="21" height="7" fill="#0080ff"/><rect x="301" y="665" width="16" height="7" fill="#0066ff"/><rect x="317" y="665" width="13" height="7" fill="#0073ff"/><rect x="330" y="665" width="0" height="7" fill="#004cff"/><rect x="79" y="672" width="4" height="7" fill="#0059ff"/><rect x="83" y="672" width="4" height="7" fill="#0073ff"/><rect x="87" y="672" width="4" height="7" fill="#008cff"/><rect x="91" y="672" width="16" height="7" fill="#0080ff"/><rect x="107" y="672" width="29" height="7" fill="#008cff"/><rect x="136" y="672" width="17" height="7" fill="#0073ff"/><rect x="153" y="672" width="74" height="7" fill="#008cff"/><rect x="227" y="672" width="4" height="7" fill="#0099ff"/><rect x="231" y="672" width="25" height="7" fill="#008cff"/><rect x="256" y="672" width="16" height="7" fill="#0073ff"/><rect x="272" y="672" width="21" height="7" fill="#0099ff"/><rect x="293" y="672" width="20" height="7" fill="#008cff"/><rect x="313" y="672" width="8" height="7" fill="#0080ff"/><rect x="321" y="672" width="9" height="7" fill="#0099ff"/><rect x="330" y="672" width="0" height="7" fill="#0073ff"/><rect x="79" y="679" width="8" height="8" fill="#008cff"/><rect x="87" y="679" width="45" height="8" fill="#0099ff"/><rect x="132" y="679" width="58" height="8" fill="#00b2ff"/><rect x="190" y="679" width="16" height="8" fill="#00bfff"/><rect x="206" y="679" width="8" height="8" fill="#00b2ff"/><rect x="214" y="679" width="21" height="8" fill="#00bfff"/><rect x="235" y="679" width="21" height="8" fill="#0099ff"/><rect x="256" y="679" width="12" height="8" fill="#00b2ff"/><rect x="268" y="679" width="37" height="8" fill="#00a6ff"/><rect x="305" y="679" width="25" height="8" fill="#00b2ff"/><rect x="330" y="679" width="0" height="8" fill="#008cff"/><rect x="79" y="687" width="4" height="8" fill="#00ffcc"/><rect x="83" y="687" width="4" height="8" fill="#00ffb2"/><rect x="87" y="687" width="33" height="8" fill="#00ff99"/><rect x="120" y="687" width="8" height="8" fill="#00ff8c"/><rect x="128" y="687" width="16" height="8" fill="#00ff99"/><rect x="144" y="687" width="21" height="8" fill="#00ffb2"/><rect x="165" y="687" width="4" height="8" fill="#00ff99"/><rect x="169" y="687" width="29" height="8" fill="#00ffa6"/><rect x="198" y="687" width="33" height="8" fill="#00ff8c"/><rect x="231" y="687" width="20" height="8" fill="#00ff99"/><rect x="251" y="687" width="9" height="8" fill="#00ff8c"/><rect x="260" y="687" width="53" height="8" fill="#00ff99"/><rect x="313" y="687" width="4" height="8" fill="#00ff8c"/><rect x="317" y="687" width="13" height="8" fill="#00ff99"/><rect x="330" y="687" width="0" height="8" fill="#00ffbf"/><rect x="79" y="695" width="4" height="7" fill="#00ffcc"/><rect x="83" y="695" width="4" height="7" fill="#00ffb2"/><rect x="87" y="695" width="12" height="7" fill="#00ff99"/><rect x="99" y="695" width="4" height="7" fill="#00ffb2"/><rect x="103" y="695" width="25" height="7" fill="#00ff99"/><rect x="128" y="695" width="21" height="7" fill="#00ffa6"/><rect x="149" y="695" width="102" height="7" fill="#00ff99"/><rect x="251" y="695" width="9" height="7" fill="#00ffa6"/><rect x="260" y="695" width="4" height="7" fill="#00ff99"/><rect x="264" y="695" width="12" height="7" fill="#00ffb2"/><rect x="276" y="695" width="4" height="7" fill="#00ff8c"/><rect x="280" y="695" width="41" height="7" fill="#00ff99"/><rect x="321" y="695" width="9" height="7" fill="#00ff8c"/><rect x="330" y="695" width="0" height="7" fill="#00ffb2"/><rect x="79" y="702" width="4" height="8" fill="#00ffb2"/><rect x="83" y="702" width="4" height="8" fill="#00ff99"/><rect x="87" y="702" width="107" height="8" fill="#00ff80"/><rect x="194" y="702" width="16" height="8" fill="#00ff99"/><rect x="210" y="702" width="79" height="8" fill="#00ff80"/><rect x="289" y="702" width="8" height="8" fill="#00ff8c"/><rect x="297" y="702" width="12" height="8" fill="#00ff80"/><rect x="309" y="702" width="4" height="8" fill="#00ff73"/><rect x="313" y="702" width="17" height="8" fill="#00ff80"/><rect x="330" y="702" width="0" height="8" fill="#00ff99"/><rect x="79" y="710" width="4" height="7" fill="#00ff8c"/><rect x="83" y="710" width="4" height="7" fill="#00ff66"/><rect x="87" y="710" width="66" height="7" fill="#00ff4c"/><rect x="153" y="710" width="57" height="7" fill="#00ff66"/><rect x="210" y="710" width="29" height="7" fill="#00ff73"/><rect x="239" y="710" width="12" height="7" fill="#00ff4c"/><rect x="251" y="710" width="79" height="7" fill="#00ff66"/><rect x="330" y="710" width="0" height="7" fill="#00ff80"/><rect x="79" y="717" width="4" height="8" fill="#00ffcc"/><rect x="83" y="717" width="4" height="8" fill="#00ffb2"/><rect x="87" y="717" width="103" height="8" fill="#00ff99"/><rect x="190" y="717" width="12" height="8" fill="#00ff8c"/><rect x="202" y="717" width="45" height="8" fill="#00ff99"/><rect x="247" y="717" width="13" height="8" fill="#00ffa6"/><rect x="260" y="717" width="29" height="8" fill="#00ff99"/><rect x="289" y="717" width="8" height="8" fill="#00ffa6"/><rect x="297" y="717" width="4" height="8" fill="#00ff99"/><rect x="301" y="717" width="4" height="8" fill="#00ffb2"/><rect x="305" y="717" width="21" height="8" fill="#00ffa6"/><rect x="326" y="717" width="4" height="8" fill="#00ff99"/><rect x="330" y="717" width="0" height="8" fill="#00ffbf"/><rect x="79" y="725" width="4" height="7" fill="#00ffa6"/><rect x="83" y="725" width="4" height="7" fill="#00ff8c"/><rect x="87" y="725" width="8" height="7" fill="#00ff73"/><rect x="95" y="725" width="12" height="7" fill="#00ff66"/><rect x="107" y="725" width="29" height="7" fill="#00ff73"/><rect x="136" y="725" width="17" height="7" fill="#00ff8c"/><rect x="153" y="725" width="4" height="7" fill="#00ff73"/><rect x="157" y="725" width="12" height="7" fill="#00ff66"/><rect x="169" y="725" width="8" height="7" fill="#00ff80"/><rect x="177" y="725" width="5" height="7" fill="#00ff66"/><rect x="182" y="725" width="61" height="7" fill="#00ff73"/><rect x="243" y="725" width="4" height="7" fill="#00ff80"/><rect x="247" y="725" width="46" height="7" fill="#00ff73"/><rect x="293" y="725" width="4" height="7" fill="#00ff80"/><rect x="297" y="725" width="8" height="7" fill="#00ff73"/><rect x="305" y="725" width="12" height="7" fill="#00ff80"/><rect x="317" y="725" width="4" height="7" fill="#00ff73"/><rect x="321" y="725" width="9" height="7" fill="#00ff80"/><rect x="330" y="725" width="0" height="7" fill="#00ff99"/><rect x="79" y="732" width="4" height="8" fill="#00ff80"/><rect x="83" y="732" width="4" height="8" fill="#00ff66"/><rect x="87" y="732" width="16" height="8" fill="#00ff4c"/><rect x="103" y="732" width="120" height="8" fill="#00ff66"/><rect x="223" y="732" width="24" height="8" fill="#00ff4c"/><rect x="247" y="732" width="17" height="8" fill="#00ff66"/><rect x="264" y="732" width="8" height="8" fill="#00ff4c"/><rect x="272" y="732" width="4" height="8" fill="#00ff66"/><rect x="276" y="732" width="8" height="8" fill="#00ff73"/><rect x="284" y="732" width="46" height="8" fill="#00ff66"/><rect x="330" y="732" width="0" height="8" fill="#00ff80"/><rect x="79" y="740" width="4" height="7" fill="#00ffd9"/><rect x="83" y="740" width="4" height="7" fill="#00ffbf"/><rect x="87" y="740" width="25" height="7" fill="#00ffa6"/><rect x="112" y="740" width="8" height="7" fill="#00ffbf"/><rect x="120" y="740" width="33" height="7" fill="#00ffa6"/><rect x="153" y="740" width="41" height="7" fill="#00ff99"/><rect x="194" y="740" width="8" height="7" fill="#00ffa6"/><rect x="202" y="740" width="12" height="7" fill="#00ffbf"/><rect x="214" y="740" width="17" height="7" fill="#00ffa6"/><rect x="231" y="740" width="16" height="7" fill="#00ff99"/><rect x="247" y="740" width="29" height="7" fill="#00ffa6"/><rect x="276" y="740" width="21" height="7" fill="#00ffb2"/><rect x="297" y="740" width="20" height="7" fill="#00ffa6"/><rect x="317" y="740" width="13" height="7" fill="#00ffb2"/><rect x="330" y="740" width="0" height="7" fill="#00ffd9"/><rect x="79" y="747" width="4" height="8" fill="#00ffa6"/><rect x="83" y="747" width="4" height="8" fill="#00ff8c"/><rect x="87" y="747" width="115" height="8" fill="#00ff73"/><rect x="202" y="747" width="17" height="8" fill="#00ff66"/><rect x="219" y="747" width="8" height="8" fill="#00ff73"/><rect x="227" y="747" width="4" height="8" fill="#00ff66"/><rect x="231" y="747" width="45" height="8" fill="#00ff73"/><rect x="276" y="747" width="8" height="8" fill="#00ff80"/><rect x="284" y="747" width="25" height="8" fill="#00ff8c"/><rect x="309" y="747" width="4" height="8" fill="#00ff66"/><rect x="313" y="747" width="4" height="8" fill="#00ff73"/><rect x="317" y="747" width="13" height="8" fill="#00ff80"/><rect x="330" y="747" width="0" height="8" fill="#00ffa6"/><rect x="79" y="755" width="4" height="7" fill="#004cff"/><rect x="83" y="755" width="4" height="7" fill="#0066ff"/><rect x="87" y="755" width="29" height="7" fill="#0073ff"/><rect x="116" y="755" width="37" height="7" fill="#0080ff"/><rect x="153" y="755" width="4" height="7" fill="#0066ff"/><rect x="157" y="755" width="37" height="7" fill="#008cff"/><rect x="194" y="755" width="20" height="7" fill="#0073ff"/><rect x="214" y="755" width="13" height="7" fill="#0080ff"/><rect x="227" y="755" width="12" height="7" fill="#0066ff"/><rect x="239" y="755" width="12" height="7" fill="#0073ff"/><rect x="251" y="755" width="13" height="7" fill="#0080ff"/><rect x="264" y="755" width="25" height="7" fill="#0073ff"/><rect x="289" y="755" width="8" height="7" fill="#0066ff"/><rect x="297" y="755" width="4" height="7" fill="#0080ff"/><rect x="301" y="755" width="29" height="7" fill="#0073ff"/><rect x="330" y="755" width="0" height="7" fill="#004cff"/><rect x="79" y="762" width="4" height="8" fill="#0080ff"/><rect x="83" y="762" width="4" height="8" fill="#0099ff"/><rect x="87" y="762" width="8" height="8" fill="#00ccff"/><rect x="95" y="762" width="8" height="8" fill="#00bfff"/><rect x="103" y="762" width="29" height="8" fill="#00b2ff"/><rect x="132" y="762" width="50" height="8" fill="#00bfff"/><rect x="182" y="762" width="4" height="8" fill="#00ccff"/><rect x="186" y="762" width="37" height="8" fill="#00bfff"/><rect x="223" y="762" width="28" height="8" fill="#00ccff"/><rect x="251" y="762" width="9" height="8" fill="#00b2ff"/><rect x="260" y="762" width="12" height="8" fill="#00bfff"/><rect x="272" y="762" width="58" height="8" fill="#00ccff"/><rect x="330" y="762" width="0" height="8" fill="#00b2ff"/><rect x="338" y="543" width="4" height="8" fill="#0026ff"/><rect x="342" y="543" width="4" height="8" fill="#0059ff"/><rect x="346" y="543" width="20" height="8" fill="#0066ff"/><rect x="366" y="543" width="9" height="8" fill="#0073ff"/><rect x="375" y="543" width="28" height="8" fill="#0059ff"/><rect x="403" y="543" width="9" height="8" fill="#0073ff"/><rect x="412" y="543" width="12" height="8" fill="#0059ff"/><rect x="424" y="543" width="37" height="8" fill="#0080ff"/><rect x="461" y="543" width="4" height="8" fill="#0066ff"/><rect x="465" y="543" width="21" height="8" fill="#0080ff"/><rect x="486" y="543" width="66" height="8" fill="#0059ff"/><rect x="552" y="543" width="12" height="8" fill="#0066ff"/><rect x="564" y="543" width="8" height="8" fill="#0073ff"/><rect x="572" y="543" width="17" height="8" fill="#0066ff"/><rect x="589" y="543" width="0" height="8" fill="#0040ff"/><rect x="338" y="551" width="4" height="8" fill="#00ff73"/><rect x="342" y="551" width="4" height="8" fill="#00ff59"/><rect x="346" y="551" width="16" height="8" fill="#00ff4c"/><rect x="362" y="551" width="37" height="8" fill="#00ff66"/><rect x="399" y="551" width="17" height="8" fill="#00ff1a"/><rect x="416" y="551" width="12" height="8" fill="#00ff66"/><rect x="428" y="551" width="8" height="8" fill="#00ff80"/><rect x="436" y="551" width="37" height="8" fill="#00ff66"/><rect x="473" y="551" width="4" height="8" fill="#00ff26"/><rect x="477" y="551" width="9" height="8" fill="#00ff66"/><rect x="486" y="551" width="8" height="8" fill="#00ff1a"/><rect x="494" y="551" width="8" height="8" fill="#00ff26"/><rect x="502" y="551" width="62" height="8" fill="#00ff66"/><rect x="564" y="551" width="8" height="8" fill="#00ff1a"/><rect x="572" y="551" width="4" height="8" fill="#00ff66"/><rect x="576" y="551" width="13" height="8" fill="#00ff26"/><rect x="589" y="551" width="0" height="8" fill="#00ff4c"/><rect x="338" y="559" width="4" height="8" fill="#0033ff"/><rect x="342" y="559" width="4" height="8" fill="#004cff"/><rect x="346" y="559" width="66" height="8" fill="#0059ff"/><rect x="412" y="559" width="24" height="8" fill="#004cff"/><rect x="436" y="559" width="17" height="8" fill="#0059ff"/><rect x="453" y="559" width="4" height="8" fill="#0026ff"/><rect x="457" y="559" width="4" height="8" fill="#0033ff"/><rect x="461" y="559" width="12" height="8" fill="#0040ff"/><rect x="473" y="559" width="9" height="8" fill="#0033ff"/><rect x="482" y="559" width="65" height="8" fill="#0026ff"/><rect x="547" y="559" width="13" height="8" fill="#0040ff"/><rect x="560" y="559" width="16" height="8" fill="#0026ff"/><rect x="576" y="559" width="8" height="8" fill="#0033ff"/><rect x="584" y="559" width="5" height="8" fill="#001aff"/><rect x="589" y="559" width="0" height="8" fill="#0000ff"/><rect x="338" y="567" width="4" height="7" fill="#0026ff"/><rect x="342" y="567" width="4" height="7" fill="#0040ff"/><rect x="346" y="567" width="66" height="7" fill="#0059ff"/><rect x="412" y="567" width="12" height="7" fill="#004cff"/><rect x="424" y="567" width="4" height="7" fill="#0040ff"/><rect x="428" y="567" width="25" height="7" fill="#0059ff"/><rect x="453" y="567" width="33" height="7" fill="#004cff"/><rect x="486" y="567" width="103" height="7" fill="#0059ff"/><rect x="589" y="567" width="0" height="7" fill="#0033ff"/><rect x="338" y="574" width="4" height="8" fill="#0040ff"/><rect x="342" y="574" width="4" height="8" fill="#0059ff"/><rect x="346" y="574" width="4" height="8" fill="#0073ff"/><rect x="350" y="574" width="78" height="8" fill="#0066ff"/><rect x="428" y="574" width="4" height="8" fill="#0040ff"/><rect x="432" y="574" width="4" height="8" fill="#004cff"/><rect x="436" y="574" width="9" height="8" fill="#0026ff"/><rect x="445" y="574" width="4" height="8" fill="#0040ff"/><rect x="449" y="574" width="24" height="8" fill="#0033ff"/><rect x="473" y="574" width="58" height="8" fill="#0040ff"/><rect x="531" y="574" width="12" height="8" fill="#0033ff"/><rect x="543" y="574" width="37" height="8" fill="#0040ff"/><rect x="580" y="574" width="4" height="8" fill="#004cff"/><rect x="584" y="574" width="5" height="8" fill="#0040ff"/><rect x="589" y="574" width="0" height="8" fill="#000dff"/><rect x="338" y="582" width="8" height="7" fill="#0000ff"/><rect x="346" y="582" width="16" height="7" fill="#000dff"/><rect x="362" y="582" width="29" height="7" fill="#001aff"/><rect x="391" y="582" width="12" height="7" fill="#000dff"/><rect x="403" y="582" width="9" height="7" fill="#001aff"/><rect x="412" y="582" width="4" height="7" fill="#0000ff"/><rect x="416" y="582" width="8" height="7" fill="#001aff"/><rect x="424" y="582" width="4" height="7" fill="#000dff"/><rect x="428" y="582" width="21" height="7" fill="#0000ff"/><rect x="449" y="582" width="4" height="7" fill="#000dff"/><rect x="453" y="582" width="24" height="7" fill="#0000ff"/><rect x="477" y="582" width="112" height="7" fill="#000dff"/><rect x="589" y="582" width="0" height="7" fill="#0000ff"/><rect x="338" y="589" width="4" height="8" fill="#0040ff"/><rect x="342" y="589" width="4" height="8" fill="#0059ff"/><rect x="346" y="589" width="12" height="8" fill="#0066ff"/><rect x="358" y="589" width="21" height="8" fill="#0073ff"/><rect x="379" y="589" width="20" height="8" fill="#0059ff"/><rect x="399" y="589" width="8" height="8" fill="#0066ff"/><rect x="407" y="589" width="5" height="8" fill="#0059ff"/><rect x="412" y="589" width="127" height="8" fill="#0066ff"/><rect x="539" y="589" width="37" height="8" fill="#0073ff"/><rect x="576" y="589" width="13" height="8" fill="#0066ff"/><rect x="589" y="589" width="0" height="8" fill="#0040ff"/><rect x="338" y="597" width="4" height="7" fill="#00ff4c"/><rect x="342" y="597" width="4" height="7" fill="#00ff33"/><rect x="346" y="597" width="41" height="7" fill="#00ff1a"/><rect x="387" y="597" width="37" height="7" fill="#00ff26"/><rect x="424" y="597" width="8" height="7" fill="#00ff1a"/><rect x="432" y="597" width="13" height="7" fill="#00ff26"/><rect x="445" y="597" width="69" height="7" fill="#00ff1a"/><rect x="514" y="597" width="17" height="7" fill="#00ff0d"/><rect x="531" y="597" width="21" height="7" fill="#00ff1a"/><rect x="552" y="597" width="8" height="7" fill="#00ff33"/><rect x="560" y="597" width="29" height="7" fill="#00ff1a"/><rect x="589" y="597" width="0" height="7" fill="#00ff40"/><rect x="338" y="604" width="8" height="8" fill="#0000ff"/><rect x="346" y="604" width="24" height="8" fill="#000dff"/><rect x="370" y="604" width="70" height="8" fill="#0000ff"/><rect x="440" y="604" width="5" height="8" fill="#000dff"/><rect x="445" y="604" width="16" height="8" fill="#0000ff"/><rect x="461" y="604" width="12" height="8" fill="#000dff"/><rect x="473" y="604" width="33" height="8" fill="#0000ff"/><rect x="506" y="604" width="8" height="8" fill="#001aff"/><rect x="514" y="604" width="62" height="8" fill="#0000ff"/><rect x="576" y="604" width="13" height="8" fill="#001aff"/><rect x="589" y="604" width="0" height="8" fill="#0000ff"/><rect x="338" y="612" width="4" height="8" fill="#004cff"/><rect x="342" y="612" width="4" height="8" fill="#0066ff"/><rect x="346" y="612" width="144" height="8" fill="#0073ff"/><rect x="490" y="612" width="16" height="8" fill="#0080ff"/><rect x="506" y="612" width="21" height="8" fill="#0073ff"/><rect x="527" y="612" width="4" height="8" fill="#0080ff"/><rect x="531" y="612" width="33" height="8" fill="#0066ff"/><rect x="564" y="612" width="25" height="8" fill="#0073ff"/><rect x="589" y="612" width="0" height="8" fill="#004cff"/><rect x="338" y="620" width="4" height="8" fill="#00e6ff"/><rect x="342" y="620" width="4" height="8" fill="#00ffff"/><rect x="346" y="620" width="20" height="8" fill="#00ffe6"/><rect x="366" y="620" width="29" height="8" fill="#00ffbf"/><rect x="395" y="620" width="33" height="8" fill="#00f2ff"/><rect x="428" y="620" width="21" height="8" fill="#00ffff"/><rect x="449" y="620" width="12" height="8" fill="#00ffe6"/><rect x="461" y="620" width="29" height="8" fill="#00ffff"/><rect x="490" y="620" width="12" height="8" fill="#00f2ff"/><rect x="502" y="620" width="4" height="8" fill="#00ffff"/><rect x="506" y="620" width="13" height="8" fill="#00ffe6"/><rect x="519" y="620" width="8" height="8" fill="#00ffff"/><rect x="527" y="620" width="29" height="8" fill="#00ffbf"/><rect x="556" y="620" width="4" height="8" fill="#00ffcc"/><rect x="560" y="620" width="29" height="8" fill="#00ffe6"/><rect x="589" y="620" width="0" height="8" fill="#00f2ff"/><rect x="338" y="628" width="4" height="7" fill="#0026ff"/><rect x="342" y="628" width="4" height="7" fill="#0040ff"/><rect x="346" y="628" width="45" height="7" fill="#0059ff"/><rect x="391" y="628" width="29" height="7" fill="#0066ff"/><rect x="420" y="628" width="62" height="7" fill="#004cff"/><rect x="482" y="628" width="28" height="7" fill="#0059ff"/><rect x="510" y="628" width="9" height="7" fill="#004cff"/><rect x="519" y="628" width="12" height="7" fill="#0059ff"/><rect x="531" y="628" width="58" height="7" fill="#0066ff"/><rect x="589" y="628" width="0" height="7" fill="#0040ff"/><rect x="338" y="635" width="4" height="7" fill="#0026ff"/><rect x="342" y="635" width="4" height="7" fill="#0040ff"/><rect x="346" y="635" width="4" height="7" fill="#0059ff"/><rect x="350" y="635" width="12" height="7" fill="#004cff"/><rect x="362" y="635" width="4" height="7" fill="#0066ff"/><rect x="366" y="635" width="58" height="7" fill="#0059ff"/><rect x="424" y="635" width="33" height="7" fill="#004cff"/><rect x="457" y="635" width="4" height="7" fill="#0040ff"/><rect x="461" y="635" width="37" height="7" fill="#004cff"/><rect x="498" y="635" width="4" height="7" fill="#0066ff"/><rect x="502" y="635" width="41" height="7" fill="#0059ff"/><rect x="543" y="635" width="17" height="7" fill="#004cff"/><rect x="560" y="635" width="29" height="7" fill="#0059ff"/><rect x="589" y="635" width="0" height="7" fill="#0033ff"/><rect x="338" y="642" width="4" height="7" fill="#0040ff"/><rect x="342" y="642" width="4" height="7" fill="#0059ff"/><rect x="346" y="642" width="57" height="7" fill="#0066ff"/><rect x="403" y="642" width="9" height="7" fill="#0059ff"/><rect x="412" y="642" width="37" height="7" fill="#0073ff"/><rect x="449" y="642" width="12" height="7" fill="#0066ff"/><rect x="461" y="642" width="21" height="7" fill="#0059ff"/><rect x="482" y="642" width="24" height="7" fill="#0066ff"/><rect x="506" y="642" width="17" height="7" fill="#0073ff"/><rect x="523" y="642" width="33" height="7" fill="#0059ff"/><rect x="556" y="642" width="4" height="7" fill="#0066ff"/><rect x="560" y="642" width="12" height="7" fill="#0080ff"/><rect x="572" y="642" width="12" height="7" fill="#0066ff"/><rect x="584" y="642" width="5" height="7" fill="#0059ff"/><rect x="589" y="642" width="0" height="7" fill="#0040ff"/><rect x="338" y="649" width="4" height="8" fill="#0033ff"/><rect x="342" y="649" width="4" height="8" fill="#004cff"/><rect x="346" y="649" width="24" height="8" fill="#0059ff"/><rect x="370" y="649" width="5" height="8" fill="#004cff"/><rect x="375" y="649" width="4" height="8" fill="#0059ff"/><rect x="379" y="649" width="4" height="8" fill="#004cff"/><rect x="383" y="649" width="53" height="8" fill="#0059ff"/><rect x="436" y="649" width="4" height="8" fill="#0066ff"/><rect x="440" y="649" width="37" height="8" fill="#0059ff"/><rect x="477" y="649" width="5" height="8" fill="#0066ff"/><rect x="482" y="649" width="20" height="8" fill="#004cff"/><rect x="502" y="649" width="29" height="8" fill="#0059ff"/><rect x="531" y="649" width="4" height="8" fill="#0073ff"/><rect x="535" y="649" width="4" height="8" fill="#004cff"/><rect x="539" y="649" width="13" height="8" fill="#0059ff"/><rect x="552" y="649" width="8" height="8" fill="#0073ff"/><rect x="560" y="649" width="16" height="8" fill="#0059ff"/><rect x="576" y="649" width="13" height="8" fill="#004cff"/><rect x="589" y="649" width="0" height="8" fill="#0026ff"/><rect x="338" y="657" width="4" height="8" fill="#0000ff"/><rect x="342" y="657" width="4" height="8" fill="#000dff"/><rect x="346" y="657" width="49" height="8" fill="#001aff"/><rect x="395" y="657" width="8" height="8" fill="#0033ff"/><rect x="403" y="657" width="25" height="8" fill="#001aff"/><rect x="428" y="657" width="12" height="8" fill="#000dff"/><rect x="440" y="657" width="21" height="8" fill="#001aff"/><rect x="461" y="657" width="25" height="8" fill="#000dff"/><rect x="486" y="657" width="8" height="8" fill="#0026ff"/><rect x="494" y="657" width="74" height="8" fill="#001aff"/><rect x="568" y="657" width="12" height="8" fill="#0026ff"/><rect x="580" y="657" width="9" height="8" fill="#001aff"/><rect x="589" y="657" width="0" height="8" fill="#0000ff"/><rect x="338" y="665" width="4" height="7" fill="#0040ff"/><rect x="342" y="665" width="4" height="7" fill="#0059ff"/><rect x="346" y="665" width="33" height="7" fill="#0066ff"/><rect x="379" y="665" width="4" height="7" fill="#0080ff"/><rect x="383" y="665" width="4" height="7" fill="#0059ff"/><rect x="387" y="665" width="4" height="7" fill="#0073ff"/><rect x="391" y="665" width="4" height="7" fill="#0066ff"/><rect x="395" y="665" width="8" height="7" fill="#0073ff"/><rect x="403" y="665" width="13" height="7" fill="#0080ff"/><rect x="416" y="665" width="12" height="7" fill="#0066ff"/><rect x="428" y="665" width="41" height="7" fill="#004cff"/><rect x="469" y="665" width="17" height="7" fill="#0059ff"/><rect x="486" y="665" width="20" height="7" fill="#004cff"/><rect x="506" y="665" width="4" height="7" fill="#0059ff"/><rect x="510" y="665" width="46" height="7" fill="#004cff"/><rect x="556" y="665" width="24" height="7" fill="#0059ff"/><rect x="580" y="665" width="9" height="7" fill="#0040ff"/><rect x="589" y="665" width="0" height="7" fill="#001aff"/><rect x="338" y="672" width="4" height="7" fill="#000dff"/><rect x="342" y="672" width="4" height="7" fill="#0026ff"/><rect x="346" y="672" width="8" height="7" fill="#0040ff"/><rect x="354" y="672" width="8" height="7" fill="#0033ff"/><rect x="362" y="672" width="17" height="7" fill="#0040ff"/><rect x="379" y="672" width="4" height="7" fill="#004cff"/><rect x="383" y="672" width="20" height="7" fill="#0040ff"/><rect x="403" y="672" width="4" height="7" fill="#004cff"/><rect x="407" y="672" width="9" height="7" fill="#0040ff"/><rect x="416" y="672" width="33" height="7" fill="#0026ff"/><rect x="449" y="672" width="41" height="7" fill="#0040ff"/><rect x="490" y="672" width="16" height="7" fill="#004cff"/><rect x="506" y="672" width="62" height="7" fill="#0040ff"/><rect x="568" y="672" width="4" height="7" fill="#004cff"/><rect x="572" y="672" width="4" height="7" fill="#0033ff"/><rect x="576" y="672" width="13" height="7" fill="#0040ff"/><rect x="589" y="672" width="0" height="7" fill="#001aff"/><rect x="338" y="679" width="4" height="8" fill="#004cff"/><rect x="342" y="679" width="4" height="8" fill="#0059ff"/><rect x="346" y="679" width="8" height="8" fill="#0066ff"/><rect x="354" y="679" width="99" height="8" fill="#0073ff"/><rect x="453" y="679" width="57" height="8" fill="#0066ff"/><rect x="510" y="679" width="21" height="8" fill="#0073ff"/><rect x="531" y="679" width="16" height="8" fill="#008cff"/><rect x="547" y="679" width="5" height="8" fill="#0080ff"/><rect x="552" y="679" width="8" height="8" fill="#008cff"/><rect x="560" y="679" width="24" height="8" fill="#0080ff"/><rect x="584" y="679" width="5" height="8" fill="#0073ff"/><rect x="589" y="679" width="0" height="8" fill="#004cff"/><rect x="338" y="687" width="4" height="8" fill="#0080ff"/><rect x="342" y="687" width="4" height="8" fill="#0099ff"/><rect x="346" y="687" width="53" height="8" fill="#00b2ff"/><rect x="399" y="687" width="21" height="8" fill="#00bfff"/><rect x="420" y="687" width="37" height="8" fill="#00b2ff"/><rect x="457" y="687" width="25" height="8" fill="#00a6ff"/><rect x="482" y="687" width="8" height="8" fill="#0080ff"/><rect x="490" y="687" width="20" height="8" fill="#008cff"/><rect x="510" y="687" width="13" height="8" fill="#0099ff"/><rect x="523" y="687" width="37" height="8" fill="#008cff"/><rect x="560" y="687" width="8" height="8" fill="#0073ff"/><rect x="568" y="687" width="21" height="8" fill="#0080ff"/><rect x="589" y="687" width="0" height="8" fill="#0059ff"/><rect x="338" y="695" width="4" height="7" fill="#004cff"/><rect x="342" y="695" width="4" height="7" fill="#0066ff"/><rect x="346" y="695" width="49" height="7" fill="#0080ff"/><rect x="395" y="695" width="8" height="7" fill="#0066ff"/><rect x="403" y="695" width="50" height="7" fill="#0080ff"/><rect x="453" y="695" width="16" height="7" fill="#0059ff"/><rect x="469" y="695" width="25" height="7" fill="#0066ff"/><rect x="494" y="695" width="8" height="7" fill="#0059ff"/><rect x="502" y="695" width="12" height="7" fill="#004cff"/><rect x="514" y="695" width="21" height="7" fill="#0059ff"/><rect x="535" y="695" width="12" height="7" fill="#004cff"/><rect x="547" y="695" width="25" height="7" fill="#0059ff"/><rect x="572" y="695" width="4" height="7" fill="#004cff"/><rect x="576" y="695" width="13" height="7" fill="#0066ff"/><rect x="589" y="695" width="0" height="7" fill="#0040ff"/><rect x="338" y="702" width="4" height="8" fill="#0033ff"/><rect x="342" y="702" width="4" height="8" fill="#004cff"/><rect x="346" y="702" width="70" height="8" fill="#0059ff"/><rect x="416" y="702" width="16" height="8" fill="#004cff"/><rect x="432" y="702" width="4" height="8" fill="#0066ff"/><rect x="436" y="702" width="17" height="8" fill="#004cff"/><rect x="453" y="702" width="12" height="8" fill="#0033ff"/><rect x="465" y="702" width="25" height="8" fill="#0040ff"/><rect x="490" y="702" width="12" height="8" fill="#004cff"/><rect x="502" y="702" width="4" height="8" fill="#0040ff"/><rect x="506" y="702" width="8" height="8" fill="#0033ff"/><rect x="514" y="702" width="21" height="8" fill="#0040ff"/><rect x="535" y="702" width="29" height="8" fill="#0026ff"/><rect x="564" y="702" width="25" height="8" fill="#004cff"/><rect x="589" y="702" width="0" height="8" fill="#0026ff"/><rect x="338" y="710" width="4" height="7" fill="#0033ff"/><rect x="342" y="710" width="4" height="7" fill="#004cff"/><rect x="346" y="710" width="20" height="7" fill="#0059ff"/><rect x="366" y="710" width="21" height="7" fill="#0066ff"/><rect x="387" y="710" width="4" height="7" fill="#0059ff"/><rect x="391" y="710" width="4" height="7" fill="#0066ff"/><rect x="395" y="710" width="33" height="7" fill="#0059ff"/><rect x="428" y="710" width="45" height="7" fill="#004cff"/><rect x="473" y="710" width="21" height="7" fill="#0066ff"/><rect x="494" y="710" width="16" height="7" fill="#0059ff"/><rect x="510" y="710" width="17" height="7" fill="#004cff"/><rect x="527" y="710" width="8" height="7" fill="#0059ff"/><rect x="535" y="710" width="12" height="7" fill="#0073ff"/><rect x="547" y="710" width="33" height="7" fill="#0059ff"/><rect x="580" y="710" width="9" height="7" fill="#004cff"/><rect x="589" y="710" width="0" height="7" fill="#0026ff"/><rect x="338" y="717" width="4" height="8" fill="#00b2ff"/><rect x="342" y="717" width="4" height="8" fill="#00ccff"/><rect x="346" y="717" width="4" height="8" fill="#00d9ff"/><rect x="350" y="717" width="12" height="8" fill="#00ccff"/><rect x="362" y="717" width="4" height="8" fill="#00d9ff"/><rect x="366" y="717" width="29" height="8" fill="#00ccff"/><rect x="395" y="717" width="66" height="8" fill="#00d9ff"/><rect x="461" y="717" width="74" height="8" fill="#00e6ff"/><rect x="535" y="717" width="17" height="8" fill="#00d9ff"/><rect x="552" y="717" width="16" height="8" fill="#00ccff"/><rect x="568" y="717" width="21" height="8" fill="#00d9ff"/><rect x="589" y="717" width="0" height="8" fill="#00b2ff"/><rect x="338" y="725" width="4" height="7" fill="#004cff"/><rect x="342" y="725" width="4" height="7" fill="#0066ff"/><rect x="346" y="725" width="12" height="7" fill="#0080ff"/><rect x="358" y="725" width="58" height="7" fill="#008cff"/><rect x="416" y="725" width="12" height="7" fill="#0080ff"/><rect x="428" y="725" width="45" height="7" fill="#008cff"/><rect x="473" y="725" width="9" height="7" fill="#0073ff"/><rect x="482" y="725" width="8" height="7" fill="#008cff"/><rect x="490" y="725" width="8" height="7" fill="#0080ff"/><rect x="498" y="725" width="12" height="7" fill="#0073ff"/><rect x="510" y="725" width="21" height="7" fill="#008cff"/><rect x="531" y="725" width="12" height="7" fill="#0080ff"/><rect x="543" y="725" width="46" height="7" fill="#0073ff"/><rect x="589" y="725" width="0" height="7" fill="#004cff"/><rect x="338" y="732" width="4" height="8" fill="#0033ff"/><rect x="342" y="732" width="4" height="8" fill="#004cff"/><rect x="346" y="732" width="20" height="8" fill="#0059ff"/><rect x="366" y="732" width="9" height="8" fill="#0066ff"/><rect x="375" y="732" width="41" height="8" fill="#0059ff"/><rect x="416" y="732" width="4" height="8" fill="#0073ff"/><rect x="420" y="732" width="4" height="8" fill="#004cff"/><rect x="424" y="732" width="45" height="8" fill="#0059ff"/><rect x="469" y="732" width="21" height="8" fill="#0066ff"/><rect x="490" y="732" width="4" height="8" fill="#0059ff"/><rect x="494" y="732" width="49" height="8" fill="#0040ff"/><rect x="543" y="732" width="13" height="8" fill="#004cff"/><rect x="556" y="732" width="33" height="8" fill="#0040ff"/><rect x="589" y="732" width="0" height="8" fill="#001aff"/><rect x="338" y="740" width="4" height="7" fill="#0059ff"/><rect x="342" y="740" width="4" height="7" fill="#0080ff"/><rect x="346" y="740" width="4" height="7" fill="#0099ff"/><rect x="350" y="740" width="4" height="7" fill="#008cff"/><rect x="354" y="740" width="16" height="7" fill="#0073ff"/><rect x="370" y="740" width="25" height="7" fill="#0080ff"/><rect x="395" y="740" width="4" height="7" fill="#008cff"/><rect x="399" y="740" width="4" height="7" fill="#0073ff"/><rect x="403" y="740" width="4" height="7" fill="#008cff"/><rect x="407" y="740" width="25" height="7" fill="#0099ff"/><rect x="432" y="740" width="62" height="7" fill="#008cff"/><rect x="494" y="740" width="16" height="7" fill="#0080ff"/><rect x="510" y="740" width="13" height="7" fill="#008cff"/><rect x="523" y="740" width="12" height="7" fill="#0080ff"/><rect x="535" y="740" width="4" height="7" fill="#0099ff"/><rect x="539" y="740" width="25" height="7" fill="#008cff"/><rect x="564" y="740" width="4" height="7" fill="#0099ff"/><rect x="568" y="740" width="21" height="7" fill="#008cff"/><rect x="589" y="740" width="0" height="7" fill="#0073ff"/><rect x="338" y="747" width="4" height="8" fill="#0080ff"/><rect x="342" y="747" width="4" height="8" fill="#0099ff"/><rect x="346" y="747" width="49" height="8" fill="#00b2ff"/><rect x="395" y="747" width="21" height="8" fill="#00bfff"/><rect x="416" y="747" width="16" height="8" fill="#00b2ff"/><rect x="432" y="747" width="33" height="8" fill="#00a6ff"/><rect x="465" y="747" width="37" height="8" fill="#00b2ff"/><rect x="502" y="747" width="33" height="8" fill="#00a6ff"/><rect x="535" y="747" width="8" height="8" fill="#00b2ff"/><rect x="543" y="747" width="13" height="8" fill="#00bfff"/><rect x="556" y="747" width="33" height="8" fill="#00b2ff"/><rect x="589" y="747" width="0" height="8" fill="#008cff"/><rect x="338" y="755" width="4" height="7" fill="#0059ff"/><rect x="342" y="755" width="4" height="7" fill="#0073ff"/><rect x="346" y="755" width="33" height="7" fill="#008cff"/><rect x="379" y="755" width="4" height="7" fill="#0073ff"/><rect x="383" y="755" width="12" height="7" fill="#0080ff"/><rect x="395" y="755" width="12" height="7" fill="#0066ff"/><rect x="407" y="755" width="9" height="7" fill="#0073ff"/><rect x="416" y="755" width="33" height="7" fill="#0066ff"/><rect x="449" y="755" width="24" height="7" fill="#0073ff"/><rect x="473" y="755" width="9" height="7" fill="#0066ff"/><rect x="482" y="755" width="12" height="7" fill="#008cff"/><rect x="494" y="755" width="4" height="7" fill="#0073ff"/><rect x="498" y="755" width="21" height="7" fill="#0080ff"/><rect x="519" y="755" width="8" height="7" fill="#0073ff"/><rect x="527" y="755" width="4" height="7" fill="#0080ff"/><rect x="531" y="755" width="4" height="7" fill="#0073ff"/><rect x="535" y="755" width="8" height="7" fill="#0080ff"/><rect x="543" y="755" width="46" height="7" fill="#0073ff"/><rect x="589" y="755" width="0" height="7" fill="#004cff"/><rect x="338" y="762" width="4" height="8" fill="#0033ff"/><rect x="342" y="762" width="4" height="8" fill="#004cff"/><rect x="346" y="762" width="8" height="8" fill="#0073ff"/><rect x="354" y="762" width="8" height="8" fill="#004cff"/><rect x="362" y="762" width="4" height="8" fill="#0059ff"/><rect x="366" y="762" width="9" height="8" fill="#004cff"/><rect x="375" y="762" width="82" height="8" fill="#0059ff"/><rect x="457" y="762" width="41" height="8" fill="#004cff"/><rect x="498" y="762" width="45" height="8" fill="#0059ff"/><rect x="543" y="762" width="13" height="8" fill="#004cff"/><rect x="556" y="762" width="4" height="8" fill="#0073ff"/><rect x="560" y="762" width="29" height="8" fill="#0066ff"/><rect x="589" y="762" width="0" height="8" fill="#0033ff"/><rect x="596" y="543" width="5" height="8" fill="#00ccff"/><rect x="601" y="543" width="4" height="8" fill="#00e6ff"/><rect x="605" y="543" width="8" height="8" fill="#00ffff"/><rect x="613" y="543" width="16" height="8" fill="#00f2ff"/><rect x="629" y="543" width="50" height="8" fill="#00ffff"/><rect x="679" y="543" width="16" height="8" fill="#00e6ff"/><rect x="695" y="543" width="46" height="8" fill="#00ffff"/><rect x="741" y="543" width="12" height="8" fill="#00fff2"/><rect x="753" y="543" width="41" height="8" fill="#00ffff"/><rect x="794" y="543" width="4" height="8" fill="#00fff2"/><rect x="798" y="543" width="21" height="8" fill="#00f2ff"/><rect x="819" y="543" width="16" height="8" fill="#00ffff"/><rect x="835" y="543" width="13" height="8" fill="#00fff2"/><rect x="848" y="543" width="0" height="8" fill="#00e6ff"/><rect x="596" y="551" width="5" height="8" fill="#00ffff"/><rect x="601" y="551" width="4" height="8" fill="#00ffe6"/><rect x="605" y="551" width="20" height="8" fill="#00ffd9"/><rect x="625" y="551" width="4" height="8" fill="#00ffbf"/><rect x="629" y="551" width="169" height="8" fill="#00ffd9"/><rect x="798" y="551" width="4" height="8" fill="#00ffcc"/><rect x="802" y="551" width="33" height="8" fill="#00ffe6"/><rect x="835" y="551" width="4" height="8" fill="#00ffd9"/><rect x="839" y="551" width="9" height="8" fill="#00ffe6"/><rect x="848" y="551" width="0" height="8" fill="#00ffff"/><rect x="596" y="559" width="5" height="8" fill="#00ff73"/><rect x="601" y="559" width="4" height="8" fill="#00ff59"/><rect x="605" y="559" width="8" height="8" fill="#00ff40"/><rect x="613" y="559" width="21" height="8" fill="#00ff4c"/><rect x="634" y="559" width="16" height="8" fill="#00ff59"/><rect x="650" y="559" width="41" height="8" fill="#00ff4c"/><rect x="691" y="559" width="13" height="8" fill="#00ff33"/><rect x="704" y="559" width="8" height="8" fill="#00ff59"/><rect x="712" y="559" width="61" height="8" fill="#00ff4c"/><rect x="773" y="559" width="9" height="8" fill="#00ff59"/><rect x="782" y="559" width="66" height="8" fill="#00ff4c"/><rect x="848" y="559" width="0" height="8" fill="#00ff73"/><rect x="596" y="567" width="5" height="7" fill="#00ffbf"/><rect x="601" y="567" width="4" height="7" fill="#00ffa6"/><rect x="605" y="567" width="4" height="7" fill="#00ff8c"/><rect x="609" y="567" width="25" height="7" fill="#00ff80"/><rect x="634" y="567" width="28" height="7" fill="#00ff99"/><rect x="662" y="567" width="21" height="7" fill="#00ff80"/><rect x="683" y="567" width="4" height="7" fill="#00ff99"/><rect x="687" y="567" width="8" height="7" fill="#00ff8c"/><rect x="695" y="567" width="13" height="7" fill="#00ff99"/><rect x="708" y="567" width="41" height="7" fill="#00ff8c"/><rect x="749" y="567" width="8" height="7" fill="#00ff80"/><rect x="757" y="567" width="25" height="7" fill="#00ff8c"/><rect x="782" y="567" width="4" height="7" fill="#00ff99"/><rect x="786" y="567" width="45" height="7" fill="#00ff8c"/><rect x="831" y="567" width="17" height="7" fill="#00ff80"/><rect x="848" y="567" width="0" height="7" fill="#00ffbf"/><rect x="596" y="574" width="5" height="8" fill="#0000ff"/><rect x="601" y="574" width="4" height="8" fill="#001aff"/><rect x="605" y="574" width="107" height="8" fill="#0026ff"/><rect x="712" y="574" width="24" height="8" fill="#001aff"/><rect x="736" y="574" width="5" height="8" fill="#0026ff"/><rect x="741" y="574" width="41" height="8" fill="#001aff"/><rect x="782" y="574" width="53" height="8" fill="#0026ff"/><rect x="835" y="574" width="8" height="8" fill="#0033ff"/><rect x="843" y="574" width="5" height="8" fill="#0026ff"/><rect x="848" y="574" width="0" height="8" fill="#0000ff"/><rect x="596" y="582" width="5" height="7" fill="#0073ff"/><rect x="601" y="582" width="4" height="7" fill="#008cff"/><rect x="605" y="582" width="8" height="7" fill="#00a6ff"/><rect x="613" y="582" width="8" height="7" fill="#0099ff"/><rect x="621" y="582" width="50" height="7" fill="#00a6ff"/><rect x="671" y="582" width="20" height="7" fill="#008cff"/><rect x="691" y="582" width="41" height="7" fill="#00a6ff"/><rect x="732" y="582" width="4" height="7" fill="#008cff"/><rect x="736" y="582" width="29" height="7" fill="#00a6ff"/><rect x="765" y="582" width="4" height="7" fill="#0099ff"/><rect x="769" y="582" width="17" height="7" fill="#00a6ff"/><rect x="786" y="582" width="25" height="7" fill="#00b2ff"/><rect x="811" y="582" width="28" height="7" fill="#0099ff"/><rect x="839" y="582" width="9" height="7" fill="#00b2ff"/><rect x="848" y="582" width="0" height="7" fill="#008cff"/><rect x="596" y="589" width="5" height="8" fill="#00ff8c"/><rect x="601" y="589" width="4" height="8" fill="#00ff73"/><rect x="605" y="589" width="177" height="8" fill="#00ff66"/><rect x="782" y="589" width="24" height="8" fill="#00ff4c"/><rect x="806" y="589" width="21" height="8" fill="#00ff66"/><rect x="827" y="589" width="21" height="8" fill="#00ff4c"/><rect x="848" y="589" width="0" height="8" fill="#00ff80"/><rect x="596" y="597" width="5" height="7" fill="#00ffff"/><rect x="601" y="597" width="4" height="7" fill="#00ffe6"/><rect x="605" y="597" width="16" height="7" fill="#00ffcc"/><rect x="621" y="597" width="25" height="7" fill="#00ffe6"/><rect x="646" y="597" width="20" height="7" fill="#00ffbf"/><rect x="666" y="597" width="21" height="7" fill="#00ffd9"/><rect x="687" y="597" width="82" height="7" fill="#00ffcc"/><rect x="769" y="597" width="21" height="7" fill="#00ffbf"/><rect x="790" y="597" width="4" height="7" fill="#00ffcc"/><rect x="794" y="597" width="41" height="7" fill="#00ffd9"/><rect x="835" y="597" width="4" height="7" fill="#00ffbf"/><rect x="839" y="597" width="9" height="7" fill="#00ffcc"/><rect x="848" y="597" width="0" height="7" fill="#00fff2"/><rect x="596" y="604" width="5" height="8" fill="#0099ff"/><rect x="601" y="604" width="4" height="8" fill="#00b2ff"/><rect x="605" y="604" width="8" height="8" fill="#00bfff"/><rect x="613" y="604" width="4" height="8" fill="#00b2ff"/><rect x="617" y="604" width="41" height="8" fill="#00bfff"/><rect x="658" y="604" width="17" height="8" fill="#00ccff"/><rect x="675" y="604" width="4" height="8" fill="#00bfff"/><rect x="679" y="604" width="12" height="8" fill="#00ccff"/><rect x="691" y="604" width="21" height="8" fill="#00b2ff"/><rect x="712" y="604" width="82" height="8" fill="#00bfff"/><rect x="794" y="604" width="12" height="8" fill="#00b2ff"/><rect x="806" y="604" width="42" height="8" fill="#00ccff"/><rect x="848" y="604" width="0" height="8" fill="#00a6ff"/><rect x="596" y="612" width="5" height="8" fill="#00ff73"/><rect x="601" y="612" width="4" height="8" fill="#00ff59"/><rect x="605" y="612" width="12" height="8" fill="#00ff4c"/><rect x="617" y="612" width="25" height="8" fill="#00ff40"/><rect x="642" y="612" width="33" height="8" fill="#00ff4c"/><rect x="675" y="612" width="16" height="8" fill="#00ff59"/><rect x="691" y="612" width="17" height="8" fill="#00ff4c"/><rect x="708" y="612" width="8" height="8" fill="#00ff40"/><rect x="716" y="612" width="4" height="8" fill="#00ff4c"/><rect x="720" y="612" width="8" height="8" fill="#00ff40"/><rect x="728" y="612" width="29" height="8" fill="#00ff4c"/><rect x="757" y="612" width="4" height="8" fill="#00ff59"/><rect x="761" y="612" width="87" height="8" fill="#00ff4c"/><rect x="848" y="612" width="0" height="8" fill="#00ff73"/><rect x="596" y="620" width="5" height="8" fill="#00bfff"/><rect x="601" y="620" width="4" height="8" fill="#00f2ff"/><rect x="605" y="620" width="29" height="8" fill="#00ffff"/><rect x="634" y="620" width="45" height="8" fill="#00f2ff"/><rect x="679" y="620" width="8" height="8" fill="#00e6ff"/><rect x="687" y="620" width="4" height="8" fill="#00ffff"/><rect x="691" y="620" width="13" height="8" fill="#00d9ff"/><rect x="704" y="620" width="24" height="8" fill="#00f2ff"/><rect x="728" y="620" width="13" height="8" fill="#00e6ff"/><rect x="741" y="620" width="8" height="8" fill="#00f2ff"/><rect x="749" y="620" width="20" height="8" fill="#00ffff"/><rect x="769" y="620" width="4" height="8" fill="#00d9ff"/><rect x="773" y="620" width="5" height="8" fill="#00ffff"/><rect x="778" y="620" width="41" height="8" fill="#00f2ff"/><rect x="819" y="620" width="16" height="8" fill="#00ffff"/><rect x="835" y="620" width="8" height="8" fill="#00f2ff"/><rect x="843" y="620" width="5" height="8" fill="#00ffff"/><rect x="848" y="620" width="0" height="8" fill="#00d9ff"/><rect x="596" y="628" width="5" height="7" fill="#00ffe6"/><rect x="601" y="628" width="4" height="7" fill="#00ffcc"/><rect x="605" y="628" width="45" height="7" fill="#00ffb2"/><rect x="650" y="628" width="8" height="7" fill="#00ffa6"/><rect x="658" y="628" width="8" height="7" fill="#00ffb2"/><rect x="666" y="628" width="5" height="7" fill="#00ffa6"/><rect x="671" y="628" width="28" height="7" fill="#00ffb2"/><rect x="699" y="628" width="5" height="7" fill="#00ffbf"/><rect x="704" y="628" width="4" height="7" fill="#00ffb2"/><rect x="708" y="628" width="4" height="7" fill="#00ffa6"/><rect x="712" y="628" width="111" height="7" fill="#00ffb2"/><rect x="823" y="628" width="8" height="7" fill="#00ffa6"/><rect x="831" y="628" width="17" height="7" fill="#00ffb2"/><rect x="848" y="628" width="0" height="7" fill="#00ffd9"/><rect x="596" y="635" width="9" height="7" fill="#0000ff"/><rect x="605" y="635" width="24" height="7" fill="#001aff"/><rect x="629" y="635" width="70" height="7" fill="#0026ff"/><rect x="699" y="635" width="21" height="7" fill="#001aff"/><rect x="720" y="635" width="4" height="7" fill="#000dff"/><rect x="724" y="635" width="91" height="7" fill="#001aff"/><rect x="815" y="635" width="12" height="7" fill="#0026ff"/><rect x="827" y="635" width="21" height="7" fill="#001aff"/><rect x="848" y="635" width="0" height="7" fill="#0000ff"/><rect x="596" y="642" width="5" height="7" fill="#000dff"/><rect x="601" y="642" width="4" height="7" fill="#001aff"/><rect x="605" y="642" width="33" height="7" fill="#0040ff"/><rect x="638" y="642" width="8" height="7" fill="#004cff"/><rect x="646" y="642" width="37" height="7" fill="#0040ff"/><rect x="683" y="642" width="12" height="7" fill="#004cff"/><rect x="695" y="642" width="25" height="7" fill="#0040ff"/><rect x="720" y="642" width="25" height="7" fill="#004cff"/><rect x="745" y="642" width="24" height="7" fill="#0026ff"/><rect x="769" y="642" width="25" height="7" fill="#0033ff"/><rect x="794" y="642" width="4" height="7" fill="#0026ff"/><rect x="798" y="642" width="13" height="7" fill="#0033ff"/><rect x="811" y="642" width="4" height="7" fill="#0040ff"/><rect x="815" y="642" width="24" height="7" fill="#004cff"/><rect x="839" y="642" width="9" height="7" fill="#0040ff"/><rect x="848" y="642" width="0" height="7" fill="#001aff"/><rect x="596" y="649" width="5" height="8" fill="#0099ff"/><rect x="601" y="649" width="4" height="8" fill="#00b2ff"/><rect x="605" y="649" width="20" height="8" fill="#00ccff"/><rect x="625" y="649" width="25" height="8" fill="#00bfff"/><rect x="650" y="649" width="8" height="8" fill="#00e6ff"/><rect x="658" y="649" width="13" height="8" fill="#00d9ff"/><rect x="671" y="649" width="33" height="8" fill="#00bfff"/><rect x="704" y="649" width="8" height="8" fill="#00ccff"/><rect x="712" y="649" width="4" height="8" fill="#00b2ff"/><rect x="716" y="649" width="41" height="8" fill="#00ccff"/><rect x="757" y="649" width="4" height="8" fill="#00d9ff"/><rect x="761" y="649" width="4" height="8" fill="#00ccff"/><rect x="765" y="649" width="8" height="8" fill="#00b2ff"/><rect x="773" y="649" width="9" height="8" fill="#00ccff"/><rect x="782" y="649" width="16" height="8" fill="#00bfff"/><rect x="798" y="649" width="8" height="8" fill="#00ccff"/><rect x="806" y="649" width="5" height="8" fill="#00b2ff"/><rect x="811" y="649" width="24" height="8" fill="#00ccff"/><rect x="835" y="649" width="8" height="8" fill="#00b2ff"/><rect x="843" y="649" width="5" height="8" fill="#00ccff"/><rect x="848" y="649" width="0" height="8" fill="#00a6ff"/><rect x="596" y="657" width="5" height="8" fill="#00fff2"/><rect x="601" y="657" width="4" height="8" fill="#00ffd9"/><rect x="605" y="657" width="4" height="8" fill="#00ffb2"/><rect x="609" y="657" width="16" height="8" fill="#00ffcc"/><rect x="625" y="657" width="13" height="8" fill="#00ffb2"/><rect x="638" y="657" width="33" height="8" fill="#00ffcc"/><rect x="671" y="657" width="4" height="8" fill="#00ffb2"/><rect x="675" y="657" width="74" height="8" fill="#00ffcc"/><rect x="749" y="657" width="16" height="8" fill="#00ffb2"/><rect x="765" y="657" width="13" height="8" fill="#00ffcc"/><rect x="778" y="657" width="20" height="8" fill="#00ffb2"/><rect x="798" y="657" width="50" height="8" fill="#00ffcc"/><rect x="848" y="657" width="0" height="8" fill="#00ffe6"/><rect x="596" y="665" width="5" height="7" fill="#0073ff"/><rect x="601" y="665" width="4" height="7" fill="#008cff"/><rect x="605" y="665" width="94" height="7" fill="#00a6ff"/><rect x="699" y="665" width="25" height="7" fill="#0099ff"/><rect x="724" y="665" width="25" height="7" fill="#00b2ff"/><rect x="749" y="665" width="45" height="7" fill="#00a6ff"/><rect x="794" y="665" width="4" height="7" fill="#00b2ff"/><rect x="798" y="665" width="8" height="7" fill="#008cff"/><rect x="806" y="665" width="5" height="7" fill="#00a6ff"/><rect x="811" y="665" width="4" height="7" fill="#008cff"/><rect x="815" y="665" width="20" height="7" fill="#0099ff"/><rect x="835" y="665" width="4" height="7" fill="#00a6ff"/><rect x="839" y="665" width="9" height="7" fill="#00b2ff"/><rect x="848" y="665" width="0" height="7" fill="#008cff"/><rect x="596" y="672" width="9" height="7" fill="#0000ff"/><rect x="605" y="672" width="24" height="7" fill="#001aff"/><rect x="629" y="672" width="5" height="7" fill="#0026ff"/><rect x="634" y="672" width="8" height="7" fill="#001aff"/><rect x="642" y="672" width="4" height="7" fill="#0026ff"/><rect x="646" y="672" width="8" height="7" fill="#000dff"/><rect x="654" y="672" width="62" height="7" fill="#001aff"/><rect x="716" y="672" width="12" height="7" fill="#0026ff"/><rect x="728" y="672" width="21" height="7" fill="#001aff"/><rect x="749" y="672" width="20" height="7" fill="#0026ff"/><rect x="769" y="672" width="4" height="7" fill="#000dff"/><rect x="773" y="672" width="21" height="7" fill="#0026ff"/><rect x="794" y="672" width="8" height="7" fill="#000dff"/><rect x="802" y="672" width="46" height="7" fill="#001aff"/><rect x="848" y="672" width="0" height="7" fill="#0000ff"/><rect x="596" y="679" width="5" height="8" fill="#00bfff"/><rect x="601" y="679" width="4" height="8" fill="#00d9ff"/><rect x="605" y="679" width="49" height="8" fill="#00f2ff"/><rect x="654" y="679" width="21" height="8" fill="#00d9ff"/><rect x="675" y="679" width="12" height="8" fill="#00f2ff"/><rect x="687" y="679" width="25" height="8" fill="#00ffff"/><rect x="712" y="679" width="4" height="8" fill="#00f2ff"/><rect x="716" y="679" width="4" height="8" fill="#00d9ff"/><rect x="720" y="679" width="12" height="8" fill="#00e6ff"/><rect x="732" y="679" width="13" height="8" fill="#00f2ff"/><rect x="745" y="679" width="24" height="8" fill="#00e6ff"/><rect x="769" y="679" width="58" height="8" fill="#00ffff"/><rect x="827" y="679" width="21" height="8" fill="#00f2ff"/><rect x="848" y="679" width="0" height="8" fill="#00ccff"/><rect x="596" y="687" width="5" height="8" fill="#0000ff"/><rect x="601" y="687" width="20" height="8" fill="#001aff"/><rect x="621" y="687" width="17" height="8" fill="#0026ff"/><rect x="638" y="687" width="4" height="8" fill="#0040ff"/><rect x="642" y="687" width="20" height="8" fill="#001aff"/><rect x="662" y="687" width="33" height="8" fill="#0033ff"/><rect x="695" y="687" width="4" height="8" fill="#0026ff"/><rect x="699" y="687" width="9" height="8" fill="#0040ff"/><rect x="708" y="687" width="49" height="8" fill="#0026ff"/><rect x="757" y="687" width="25" height="8" fill="#0033ff"/><rect x="782" y="687" width="16" height="8" fill="#0026ff"/><rect x="798" y="687" width="4" height="8" fill="#001aff"/><rect x="802" y="687" width="9" height="8" fill="#0040ff"/><rect x="811" y="687" width="24" height="8" fill="#0033ff"/><rect x="835" y="687" width="13" height="8" fill="#001aff"/><rect x="848" y="687" width="0" height="8" fill="#0000ff"/><rect x="596" y="695" width="5" height="7" fill="#00ccff"/><rect x="601" y="695" width="4" height="7" fill="#00f2ff"/><rect x="605" y="695" width="8" height="7" fill="#00fff2"/><rect x="613" y="695" width="21" height="7" fill="#00ffff"/><rect x="634" y="695" width="12" height="7" fill="#00fff2"/><rect x="646" y="695" width="20" height="7" fill="#00ffff"/><rect x="666" y="695" width="5" height="7" fill="#00fff2"/><rect x="671" y="695" width="135" height="7" fill="#00ffff"/><rect x="806" y="695" width="17" height="7" fill="#00fff2"/><rect x="823" y="695" width="4" height="7" fill="#00f2ff"/><rect x="827" y="695" width="21" height="7" fill="#00ffff"/><rect x="848" y="695" width="0" height="7" fill="#00d9ff"/><rect x="596" y="702" width="5" height="8" fill="#00ffff"/><rect x="601" y="702" width="4" height="8" fill="#00ffe6"/><rect x="605" y="702" width="12" height="8" fill="#00ffcc"/><rect x="617" y="702" width="45" height="8" fill="#00ffd9"/><rect x="662" y="702" width="17" height="8" fill="#00ffe6"/><rect x="679" y="702" width="12" height="8" fill="#00ffcc"/><rect x="691" y="702" width="17" height="8" fill="#00ffd9"/><rect x="708" y="702" width="12" height="8" fill="#00ffcc"/><rect x="720" y="702" width="12" height="8" fill="#00ffd9"/><rect x="732" y="702" width="25" height="8" fill="#00ffcc"/><rect x="757" y="702" width="91" height="8" fill="#00ffd9"/><rect x="848" y="702" width="0" height="8" fill="#00ffff"/><rect x="596" y="710" width="5" height="7" fill="#00b2ff"/><rect x="601" y="710" width="4" height="7" fill="#00ccff"/><rect x="605" y="710" width="8" height="7" fill="#00d9ff"/><rect x="613" y="710" width="16" height="7" fill="#00e6ff"/><rect x="629" y="710" width="62" height="7" fill="#00d9ff"/><rect x="691" y="710" width="4" height="7" fill="#00e6ff"/><rect x="695" y="710" width="66" height="7" fill="#00d9ff"/><rect x="761" y="710" width="12" height="7" fill="#00ccff"/><rect x="773" y="710" width="70" height="7" fill="#00d9ff"/><rect x="843" y="710" width="5" height="7" fill="#00e6ff"/><rect x="848" y="710" width="0" height="7" fill="#00ccff"/><rect x="596" y="717" width="5" height="8" fill="#00f2ff"/><rect x="601" y="717" width="4" height="8" fill="#00fff2"/><rect x="605" y="717" width="24" height="8" fill="#00ffd9"/><rect x="629" y="717" width="25" height="8" fill="#00ffcc"/><rect x="654" y="717" width="4" height="8" fill="#00ffbf"/><rect x="658" y="717" width="25" height="8" fill="#00ffd9"/><rect x="683" y="717" width="8" height="8" fill="#00ffcc"/><rect x="691" y="717" width="13" height="8" fill="#00ffd9"/><rect x="704" y="717" width="16" height="8" fill="#00ffcc"/><rect x="720" y="717" width="8" height="8" fill="#00ffd9"/><rect x="728" y="717" width="21" height="8" fill="#00ffcc"/><rect x="749" y="717" width="4" height="8" fill="#00ffbf"/><rect x="753" y="717" width="20" height="8" fill="#00ffd9"/><rect x="773" y="717" width="9" height="8" fill="#00ffbf"/><rect x="782" y="717" width="4" height="8" fill="#00ffcc"/><rect x="786" y="717" width="20" height="8" fill="#00ffd9"/><rect x="806" y="717" width="13" height="8" fill="#00ffbf"/><rect x="819" y="717" width="8" height="8" fill="#00ffcc"/><rect x="827" y="717" width="21" height="8" fill="#00ffbf"/><rect x="848" y="717" width="0" height="8" fill="#00ffe6"/><rect x="596" y="725" width="5" height="7" fill="#00ffd9"/><rect x="601" y="725" width="4" height="7" fill="#00ffbf"/><rect x="605" y="725" width="45" height="7" fill="#00ffa6"/><rect x="650" y="725" width="16" height="7" fill="#00ff99"/><rect x="666" y="725" width="21" height="7" fill="#00ffa6"/><rect x="687" y="725" width="21" height="7" fill="#00ffb2"/><rect x="708" y="725" width="53" height="7" fill="#00ffa6"/><rect x="761" y="725" width="4" height="7" fill="#00ffb2"/><rect x="765" y="725" width="25" height="7" fill="#00ffa6"/><rect x="790" y="725" width="4" height="7" fill="#00ffbf"/><rect x="794" y="725" width="54" height="7" fill="#00ffa6"/><rect x="848" y="725" width="0" height="7" fill="#00ffcc"/><rect x="596" y="732" width="5" height="8" fill="#00ffe6"/><rect x="601" y="732" width="4" height="8" fill="#00ffb2"/><rect x="605" y="732" width="16" height="8" fill="#00ffa6"/><rect x="621" y="732" width="70" height="8" fill="#00ffb2"/><rect x="691" y="732" width="21" height="8" fill="#00ffbf"/><rect x="712" y="732" width="20" height="8" fill="#00ffb2"/><rect x="732" y="732" width="9" height="8" fill="#00ffa6"/><rect x="741" y="732" width="8" height="8" fill="#00ffcc"/><rect x="749" y="732" width="37" height="8" fill="#00ffb2"/><rect x="786" y="732" width="62" height="8" fill="#00ffa6"/><rect x="848" y="732" width="0" height="8" fill="#00ffcc"/><rect x="596" y="740" width="5" height="7" fill="#0000ff"/><rect x="601" y="740" width="4" height="7" fill="#000dff"/><rect x="605" y="740" width="4" height="7" fill="#0033ff"/><rect x="609" y="740" width="99" height="7" fill="#001aff"/><rect x="708" y="740" width="4" height="7" fill="#000dff"/><rect x="712" y="740" width="4" height="7" fill="#0026ff"/><rect x="716" y="740" width="16" height="7" fill="#001aff"/><rect x="732" y="740" width="41" height="7" fill="#000dff"/><rect x="773" y="740" width="21" height="7" fill="#001aff"/><rect x="794" y="740" width="4" height="7" fill="#0026ff"/><rect x="798" y="740" width="17" height="7" fill="#001aff"/><rect x="815" y="740" width="12" height="7" fill="#000dff"/><rect x="827" y="740" width="21" height="7" fill="#001aff"/><rect x="848" y="740" width="0" height="7" fill="#0000ff"/><rect x="596" y="747" width="5" height="8" fill="#00bfff"/><rect x="601" y="747" width="4" height="8" fill="#00d9ff"/><rect x="605" y="747" width="41" height="8" fill="#00f2ff"/><rect x="646" y="747" width="20" height="8" fill="#00d9ff"/><rect x="666" y="747" width="9" height="8" fill="#00ffff"/><rect x="675" y="747" width="8" height="8" fill="#00d9ff"/><rect x="683" y="747" width="12" height="8" fill="#00f2ff"/><rect x="695" y="747" width="17" height="8" fill="#00e6ff"/><rect x="712" y="747" width="16" height="8" fill="#00ffff"/><rect x="728" y="747" width="58" height="8" fill="#00f2ff"/><rect x="786" y="747" width="25" height="8" fill="#00ffff"/><rect x="811" y="747" width="20" height="8" fill="#00f2ff"/><rect x="831" y="747" width="8" height="8" fill="#00e6ff"/><rect x="839" y="747" width="9" height="8" fill="#00f2ff"/><rect x="848" y="747" width="0" height="8" fill="#00ccff"/><rect x="596" y="755" width="5" height="7" fill="#0099ff"/><rect x="601" y="755" width="4" height="7" fill="#00b2ff"/><rect x="605" y="755" width="4" height="7" fill="#00bfff"/><rect x="609" y="755" width="20" height="7" fill="#00ccff"/><rect x="629" y="755" width="50" height="7" fill="#00bfff"/><rect x="679" y="755" width="25" height="7" fill="#00ccff"/><rect x="704" y="755" width="20" height="7" fill="#00bfff"/><rect x="724" y="755" width="8" height="7" fill="#00ccff"/><rect x="732" y="755" width="54" height="7" fill="#00bfff"/><rect x="786" y="755" width="4" height="7" fill="#00ccff"/><rect x="790" y="755" width="12" height="7" fill="#00bfff"/><rect x="802" y="755" width="9" height="7" fill="#00ccff"/><rect x="811" y="755" width="4" height="7" fill="#00b2ff"/><rect x="815" y="755" width="12" height="7" fill="#00bfff"/><rect x="827" y="755" width="16" height="7" fill="#00b2ff"/><rect x="843" y="755" width="5" height="7" fill="#00bfff"/><rect x="848" y="755" width="0" height="7" fill="#0099ff"/><rect x="596" y="762" width="5" height="8" fill="#00ffff"/><rect x="601" y="762" width="4" height="8" fill="#00ffe6"/><rect x="605" y="762" width="8" height="8" fill="#00ffcc"/><rect x="613" y="762" width="37" height="8" fill="#00ffbf"/><rect x="650" y="762" width="111" height="8" fill="#00ffcc"/><rect x="761" y="762" width="8" height="8" fill="#00ffbf"/><rect x="769" y="762" width="13" height="8" fill="#00ffd9"/><rect x="782" y="762" width="4" height="8" fill="#00ffbf"/><rect x="786" y="762" width="16" height="8" fill="#00ffcc"/><rect x="802" y="762" width="9" height="8" fill="#00ffbf"/><rect x="811" y="762" width="37" height="8" fill="#00ffcc"/><rect x="848" y="762" width="0" height="8" fill="#00fff2"/><rect x="856" y="543" width="4" height="8" fill="#0026ff"/><rect x="860" y="543" width="4" height="8" fill="#0040ff"/><rect x="864" y="543" width="8" height="8" fill="#0059ff"/><rect x="872" y="543" width="8" height="8" fill="#0066ff"/><rect x="880" y="543" width="4" height="8" fill="#004cff"/><rect x="884" y="543" width="17" height="8" fill="#0066ff"/><rect x="901" y="543" width="8" height="8" fill="#0059ff"/><rect x="909" y="543" width="21" height="8" fill="#0033ff"/><rect x="930" y="543" width="4" height="8" fill="#0026ff"/><rect x="934" y="543" width="41" height="8" fill="#0033ff"/><rect x="975" y="543" width="20" height="8" fill="#0040ff"/><rect x="995" y="543" width="54" height="8" fill="#0033ff"/><rect x="1049" y="543" width="4" height="8" fill="#0040ff"/><rect x="1053" y="543" width="8" height="8" fill="#004cff"/><rect x="1061" y="543" width="13" height="8" fill="#0033ff"/><rect x="1074" y="543" width="28" height="8" fill="#0026ff"/><rect x="1102" y="543" width="5" height="8" fill="#0033ff"/><rect x="1107" y="543" width="1" height="8" fill="#000dff"/><rect x="856" y="551" width="8" height="8" fill="#0000ff"/><rect x="864" y="551" width="57" height="8" fill="#001aff"/><rect x="921" y="551" width="4" height="8" fill="#0000ff"/><rect x="925" y="551" width="58" height="8" fill="#001aff"/><rect x="983" y="551" width="12" height="8" fill="#0000ff"/><rect x="995" y="551" width="9" height="8" fill="#001aff"/><rect x="1004" y="551" width="8" height="8" fill="#000dff"/><rect x="1012" y="551" width="20" height="8" fill="#0026ff"/><rect x="1032" y="551" width="9" height="8" fill="#001aff"/><rect x="1041" y="551" width="29" height="8" fill="#0026ff"/><rect x="1070" y="551" width="12" height="8" fill="#001aff"/><rect x="1082" y="551" width="8" height="8" fill="#0000ff"/><rect x="1090" y="551" width="17" height="8" fill="#001aff"/><rect x="1107" y="551" width="1" height="8" fill="#0000ff"/><rect x="856" y="559" width="8" height="8" fill="#0000ff"/><rect x="864" y="559" width="29" height="8" fill="#000dff"/><rect x="893" y="559" width="90" height="8" fill="#001aff"/><rect x="983" y="559" width="8" height="8" fill="#000dff"/><rect x="991" y="559" width="9" height="8" fill="#0033ff"/><rect x="1000" y="559" width="28" height="8" fill="#001aff"/><rect x="1028" y="559" width="13" height="8" fill="#000dff"/><rect x="1041" y="559" width="24" height="8" fill="#001aff"/><rect x="1065" y="559" width="21" height="8" fill="#0026ff"/><rect x="1086" y="559" width="12" height="8" fill="#001aff"/><rect x="1098" y="559" width="9" height="8" fill="#0026ff"/><rect x="1107" y="559" width="1" height="8" fill="#0000ff"/><rect x="856" y="567" width="4" height="7" fill="#0000ff"/><rect x="860" y="567" width="8" height="7" fill="#000dff"/><rect x="868" y="567" width="16" height="7" fill="#0026ff"/><rect x="884" y="567" width="9" height="7" fill="#001aff"/><rect x="893" y="567" width="4" height="7" fill="#0026ff"/><rect x="897" y="567" width="12" height="7" fill="#001aff"/><rect x="909" y="567" width="12" height="7" fill="#0026ff"/><rect x="921" y="567" width="9" height="7" fill="#001aff"/><rect x="930" y="567" width="4" height="7" fill="#000dff"/><rect x="934" y="567" width="49" height="7" fill="#001aff"/><rect x="983" y="567" width="8" height="7" fill="#0033ff"/><rect x="991" y="567" width="9" height="7" fill="#0026ff"/><rect x="1000" y="567" width="16" height="7" fill="#000dff"/><rect x="1016" y="567" width="41" height="7" fill="#001aff"/><rect x="1057" y="567" width="13" height="7" fill="#000dff"/><rect x="1070" y="567" width="37" height="7" fill="#001aff"/><rect x="1107" y="567" width="1" height="7" fill="#0000ff"/><rect x="856" y="574" width="4" height="8" fill="#001aff"/><rect x="860" y="574" width="4" height="8" fill="#0033ff"/><rect x="864" y="574" width="12" height="8" fill="#004cff"/><rect x="876" y="574" width="12" height="8" fill="#0040ff"/><rect x="888" y="574" width="17" height="8" fill="#0033ff"/><rect x="905" y="574" width="16" height="8" fill="#004cff"/><rect x="921" y="574" width="9" height="8" fill="#0040ff"/><rect x="930" y="574" width="61" height="8" fill="#004cff"/><rect x="991" y="574" width="4" height="8" fill="#0033ff"/><rect x="995" y="574" width="9" height="8" fill="#0059ff"/><rect x="1004" y="574" width="24" height="8" fill="#004cff"/><rect x="1028" y="574" width="13" height="8" fill="#0059ff"/><rect x="1041" y="574" width="66" height="8" fill="#004cff"/><rect x="1107" y="574" width="1" height="8" fill="#0026ff"/><rect x="856" y="582" width="4" height="7" fill="#00ff00"/><rect x="860" y="582" width="4" height="7" fill="#1aff00"/><rect x="864" y="582" width="12" height="7" fill="#26ff00"/><rect x="876" y="582" width="21" height="7" fill="#1aff00"/><rect x="897" y="582" width="53" height="7" fill="#26ff00"/><rect x="950" y="582" width="21" height="7" fill="#1aff00"/><rect x="971" y="582" width="12" height="7" fill="#26ff00"/><rect x="983" y="582" width="4" height="7" fill="#33ff00"/><rect x="987" y="582" width="25" height="7" fill="#1aff00"/><rect x="1012" y="582" width="33" height="7" fill="#26ff00"/><rect x="1045" y="582" width="4" height="7" fill="#33ff00"/><rect x="1049" y="582" width="8" height="7" fill="#26ff00"/><rect x="1057" y="582" width="17" height="7" fill="#1aff00"/><rect x="1074" y="582" width="8" height="7" fill="#26ff00"/><rect x="1082" y="582" width="16" height="7" fill="#1aff00"/><rect x="1098" y="582" width="9" height="7" fill="#33ff00"/><rect x="1107" y="582" width="1" height="7" fill="#0dff00"/><rect x="856" y="589" width="4" height="8" fill="#001aff"/><rect x="860" y="589" width="4" height="8" fill="#0040ff"/><rect x="864" y="589" width="86" height="8" fill="#0059ff"/><rect x="950" y="589" width="4" height="8" fill="#004cff"/><rect x="954" y="589" width="21" height="8" fill="#0059ff"/><rect x="975" y="589" width="4" height="8" fill="#0066ff"/><rect x="979" y="589" width="29" height="8" fill="#0040ff"/><rect x="1008" y="589" width="8" height="8" fill="#0059ff"/><rect x="1016" y="589" width="4" height="8" fill="#0066ff"/><rect x="1020" y="589" width="12" height="8" fill="#0059ff"/><rect x="1032" y="589" width="5" height="8" fill="#0040ff"/><rect x="1037" y="589" width="70" height="8" fill="#0059ff"/><rect x="1107" y="589" width="1" height="8" fill="#0033ff"/><rect x="856" y="604" width="16" height="8" fill="#0000ff"/><rect x="872" y="604" width="33" height="8" fill="#000dff"/><rect x="905" y="604" width="82" height="8" fill="#0000ff"/><rect x="987" y="604" width="21" height="8" fill="#001aff"/><rect x="1008" y="604" width="100" height="8" fill="#0000ff"/><rect x="856" y="612" width="8" height="8" fill="#0000ff"/><rect x="864" y="612" width="8" height="8" fill="#000dff"/><rect x="872" y="612" width="25" height="8" fill="#001aff"/><rect x="897" y="612" width="28" height="8" fill="#0000ff"/><rect x="925" y="612" width="21" height="8" fill="#001aff"/><rect x="946" y="612" width="54" height="8" fill="#000dff"/><rect x="1000" y="612" width="4" height="8" fill="#001aff"/><rect x="1004" y="612" width="45" height="8" fill="#000dff"/><rect x="1049" y="612" width="29" height="8" fill="#001aff"/><rect x="1078" y="612" width="29" height="8" fill="#000dff"/><rect x="1107" y="612" width="1" height="8" fill="#0000ff"/><rect x="856" y="620" width="65" height="8" fill="#0000ff"/><rect x="921" y="620" width="9" height="8" fill="#001aff"/><rect x="930" y="620" width="45" height="8" fill="#000dff"/><rect x="975" y="620" width="133" height="8" fill="#0000ff"/><rect x="856" y="628" width="4" height="7" fill="#001aff"/><rect x="860" y="628" width="4" height="7" fill="#0033ff"/><rect x="864" y="628" width="16" height="7" fill="#004cff"/><rect x="880" y="628" width="33" height="7" fill="#0059ff"/><rect x="913" y="628" width="33" height="7" fill="#004cff"/><rect x="946" y="628" width="17" height="7" fill="#0059ff"/><rect x="963" y="628" width="61" height="7" fill="#004cff"/><rect x="1024" y="628" width="25" height="7" fill="#0040ff"/><rect x="1049" y="628" width="16" height="7" fill="#004cff"/><rect x="1065" y="628" width="17" height="7" fill="#0059ff"/><rect x="1082" y="628" width="12" height="7" fill="#004cff"/><rect x="1094" y="628" width="4" height="7" fill="#0040ff"/><rect x="1098" y="628" width="4" height="7" fill="#0059ff"/><rect x="1102" y="628" width="5" height="7" fill="#004cff"/><rect x="1107" y="628" width="1" height="7" fill="#0026ff"/><rect x="856" y="635" width="4" height="7" fill="#004cff"/><rect x="860" y="635" width="4" height="7" fill="#0066ff"/><rect x="864" y="635" width="8" height="7" fill="#0073ff"/><rect x="872" y="635" width="8" height="7" fill="#0080ff"/><rect x="880" y="635" width="41" height="7" fill="#0073ff"/><rect x="921" y="635" width="9" height="7" fill="#0080ff"/><rect x="930" y="635" width="65" height="7" fill="#0066ff"/><rect x="995" y="635" width="17" height="7" fill="#0073ff"/><rect x="1012" y="635" width="8" height="7" fill="#0066ff"/><rect x="1020" y="635" width="74" height="7" fill="#0073ff"/><rect x="1094" y="635" width="13" height="7" fill="#0066ff"/><rect x="1107" y="635" width="1" height="7" fill="#004cff"/><rect x="856" y="642" width="4" height="7" fill="#0000ff"/><rect x="860" y="642" width="4" height="7" fill="#001aff"/><rect x="864" y="642" width="8" height="7" fill="#0033ff"/><rect x="872" y="642" width="21" height="7" fill="#0026ff"/><rect x="893" y="642" width="24" height="7" fill="#0040ff"/><rect x="917" y="642" width="41" height="7" fill="#0033ff"/><rect x="958" y="642" width="25" height="7" fill="#0040ff"/><rect x="983" y="642" width="21" height="7" fill="#0033ff"/><rect x="1004" y="642" width="4" height="7" fill="#0040ff"/><rect x="1008" y="642" width="16" height="7" fill="#004cff"/><rect x="1024" y="642" width="83" height="7" fill="#0033ff"/><rect x="1107" y="642" width="1" height="7" fill="#000dff"/><rect x="856" y="649" width="69" height="8" fill="#0000ff"/><rect x="925" y="649" width="17" height="8" fill="#000dff"/><rect x="942" y="649" width="166" height="8" fill="#0000ff"/><rect x="856" y="657" width="8" height="8" fill="#0000ff"/><rect x="864" y="657" width="20" height="8" fill="#001aff"/><rect x="884" y="657" width="17" height="8" fill="#0026ff"/><rect x="901" y="657" width="8" height="8" fill="#001aff"/><rect x="909" y="657" width="41" height="8" fill="#0026ff"/><rect x="950" y="657" width="74" height="8" fill="#001aff"/><rect x="1024" y="657" width="13" height="8" fill="#000dff"/><rect x="1037" y="657" width="24" height="8" fill="#0026ff"/><rect x="1061" y="657" width="29" height="8" fill="#001aff"/><rect x="1090" y="657" width="4" height="8" fill="#0000ff"/><rect x="1094" y="657" width="13" height="8" fill="#0026ff"/><rect x="1107" y="657" width="1" height="8" fill="#0000ff"/><rect x="856" y="665" width="152" height="7" fill="#0000ff"/><rect x="1008" y="665" width="24" height="7" fill="#000dff"/><rect x="1032" y="665" width="76" height="7" fill="#0000ff"/><rect x="856" y="672" width="16" height="7" fill="#0000ff"/><rect x="872" y="672" width="4" height="7" fill="#000dff"/><rect x="876" y="672" width="8" height="7" fill="#001aff"/><rect x="884" y="672" width="9" height="7" fill="#000dff"/><rect x="893" y="672" width="37" height="7" fill="#001aff"/><rect x="930" y="672" width="8" height="7" fill="#0000ff"/><rect x="938" y="672" width="12" height="7" fill="#001aff"/><rect x="950" y="672" width="8" height="7" fill="#000dff"/><rect x="958" y="672" width="107" height="7" fill="#0000ff"/><rect x="1065" y="672" width="9" height="7" fill="#000dff"/><rect x="1074" y="672" width="34" height="7" fill="#0000ff"/><rect x="856" y="679" width="4" height="8" fill="#00ffe6"/><rect x="860" y="679" width="4" height="8" fill="#00ffcc"/><rect x="864" y="679" width="29" height="8" fill="#00ffa6"/><rect x="893" y="679" width="16" height="8" fill="#00ffb2"/><rect x="909" y="679" width="4" height="8" fill="#00ffbf"/><rect x="913" y="679" width="17" height="8" fill="#00ffb2"/><rect x="930" y="679" width="4" height="8" fill="#00ffbf"/><rect x="934" y="679" width="24" height="8" fill="#00ffb2"/><rect x="958" y="679" width="5" height="8" fill="#00ffcc"/><rect x="963" y="679" width="12" height="8" fill="#00ffa6"/><rect x="975" y="679" width="41" height="8" fill="#00ffb2"/><rect x="1016" y="679" width="29" height="8" fill="#00ffa6"/><rect x="1045" y="679" width="62" height="8" fill="#00ffb2"/><rect x="1107" y="679" width="1" height="8" fill="#00ffd9"/><rect x="856" y="687" width="4" height="8" fill="#004cff"/><rect x="860" y="687" width="4" height="8" fill="#0066ff"/><rect x="864" y="687" width="8" height="8" fill="#0073ff"/><rect x="872" y="687" width="33" height="8" fill="#0066ff"/><rect x="905" y="687" width="4" height="8" fill="#0073ff"/><rect x="909" y="687" width="4" height="8" fill="#0080ff"/><rect x="913" y="687" width="99" height="8" fill="#0073ff"/><rect x="1012" y="687" width="4" height="8" fill="#0080ff"/><rect x="1016" y="687" width="4" height="8" fill="#0073ff"/><rect x="1020" y="687" width="4" height="8" fill="#0066ff"/><rect x="1024" y="687" width="4" height="8" fill="#0080ff"/><rect x="1028" y="687" width="70" height="8" fill="#0073ff"/><rect x="1098" y="687" width="4" height="8" fill="#0066ff"/><rect x="1102" y="687" width="5" height="8" fill="#0073ff"/><rect x="1107" y="687" width="1" height="8" fill="#004cff"/><rect x="856" y="695" width="8" height="7" fill="#0000ff"/><rect x="864" y="695" width="4" height="7" fill="#001aff"/><rect x="868" y="695" width="16" height="7" fill="#0026ff"/><rect x="884" y="695" width="29" height="7" fill="#001aff"/><rect x="913" y="695" width="21" height="7" fill="#0026ff"/><rect x="934" y="695" width="20" height="7" fill="#001aff"/><rect x="954" y="695" width="4" height="7" fill="#0026ff"/><rect x="958" y="695" width="124" height="7" fill="#001aff"/><rect x="1082" y="695" width="4" height="7" fill="#0026ff"/><rect x="1086" y="695" width="8" height="7" fill="#001aff"/><rect x="1094" y="695" width="4" height="7" fill="#0000ff"/><rect x="1098" y="695" width="9" height="7" fill="#001aff"/><rect x="1107" y="695" width="1" height="7" fill="#0000ff"/><rect x="856" y="702" width="4" height="8" fill="#0000ff"/><rect x="860" y="702" width="4" height="8" fill="#000dff"/><rect x="864" y="702" width="29" height="8" fill="#001aff"/><rect x="893" y="702" width="4" height="8" fill="#000dff"/><rect x="897" y="702" width="4" height="8" fill="#0033ff"/><rect x="901" y="702" width="49" height="8" fill="#000dff"/><rect x="950" y="702" width="8" height="8" fill="#001aff"/><rect x="958" y="702" width="25" height="8" fill="#000dff"/><rect x="983" y="702" width="54" height="8" fill="#001aff"/><rect x="1037" y="702" width="4" height="8" fill="#0026ff"/><rect x="1041" y="702" width="29" height="8" fill="#001aff"/><rect x="1070" y="702" width="4" height="8" fill="#0026ff"/><rect x="1074" y="702" width="33" height="8" fill="#001aff"/><rect x="1107" y="702" width="1" height="8" fill="#0000ff"/><rect x="856" y="710" width="4" height="7" fill="#000dff"/><rect x="860" y="710" width="4" height="7" fill="#0026ff"/><rect x="864" y="710" width="78" height="7" fill="#0040ff"/><rect x="942" y="710" width="8" height="7" fill="#0033ff"/><rect x="950" y="710" width="21" height="7" fill="#0040ff"/><rect x="971" y="710" width="8" height="7" fill="#004cff"/><rect x="979" y="710" width="8" height="7" fill="#0040ff"/><rect x="987" y="710" width="13" height="7" fill="#0033ff"/><rect x="1000" y="710" width="4" height="7" fill="#0040ff"/><rect x="1004" y="710" width="61" height="7" fill="#004cff"/><rect x="1065" y="710" width="9" height="7" fill="#0026ff"/><rect x="1074" y="710" width="33" height="7" fill="#0040ff"/><rect x="1107" y="710" width="1" height="7" fill="#001aff"/><rect x="856" y="717" width="4" height="8" fill="#000dff"/><rect x="860" y="717" width="4" height="8" fill="#001aff"/><rect x="864" y="717" width="33" height="8" fill="#0033ff"/><rect x="897" y="717" width="4" height="8" fill="#0026ff"/><rect x="901" y="717" width="94" height="8" fill="#0040ff"/><rect x="995" y="717" width="9" height="8" fill="#004cff"/><rect x="1004" y="717" width="45" height="8" fill="#0040ff"/><rect x="1049" y="717" width="12" height="8" fill="#004cff"/><rect x="1061" y="717" width="25" height="8" fill="#0040ff"/><rect x="1086" y="717" width="21" height="8" fill="#004cff"/><rect x="1107" y="717" width="1" height="8" fill="#0026ff"/><rect x="856" y="725" width="8" height="7" fill="#0000ff"/><rect x="864" y="725" width="37" height="7" fill="#001aff"/><rect x="901" y="725" width="24" height="7" fill="#000dff"/><rect x="925" y="725" width="29" height="7" fill="#001aff"/><rect x="954" y="725" width="54" height="7" fill="#0026ff"/><rect x="1008" y="725" width="16" height="7" fill="#001aff"/><rect x="1024" y="725" width="17" height="7" fill="#0026ff"/><rect x="1041" y="725" width="16" height="7" fill="#000dff"/><rect x="1057" y="725" width="50" height="7" fill="#001aff"/><rect x="1107" y="725" width="1" height="7" fill="#0000ff"/><rect x="856" y="732" width="4" height="8" fill="#0000ff"/><rect x="860" y="732" width="37" height="8" fill="#0026ff"/><rect x="897" y="732" width="4" height="8" fill="#001aff"/><rect x="901" y="732" width="24" height="8" fill="#0040ff"/><rect x="925" y="732" width="25" height="8" fill="#0026ff"/><rect x="950" y="732" width="17" height="8" fill="#0040ff"/><rect x="967" y="732" width="16" height="8" fill="#0033ff"/><rect x="983" y="732" width="37" height="8" fill="#000dff"/><rect x="1020" y="732" width="8" height="8" fill="#001aff"/><rect x="1028" y="732" width="17" height="8" fill="#000dff"/><rect x="1045" y="732" width="8" height="8" fill="#001aff"/><rect x="1053" y="732" width="29" height="8" fill="#000dff"/><rect x="1082" y="732" width="26" height="8" fill="#0000ff"/><rect x="856" y="740" width="139" height="7" fill="#0000ff"/><rect x="995" y="740" width="13" height="7" fill="#000dff"/><rect x="1008" y="740" width="90" height="7" fill="#0000ff"/><rect x="1098" y="740" width="9" height="7" fill="#000dff"/><rect x="1107" y="740" width="1" height="7" fill="#0000ff"/><rect x="856" y="747" width="49" height="8" fill="#0000ff"/><rect x="905" y="747" width="8" height="8" fill="#000dff"/><rect x="913" y="747" width="8" height="8" fill="#0000ff"/><rect x="921" y="747" width="21" height="8" fill="#000dff"/><rect x="942" y="747" width="49" height="8" fill="#0000ff"/><rect x="991" y="747" width="9" height="8" fill="#001aff"/><rect x="1000" y="747" width="41" height="8" fill="#0000ff"/><rect x="1041" y="747" width="45" height="8" fill="#000dff"/><rect x="1086" y="747" width="22" height="8" fill="#0000ff"/><rect x="856" y="755" width="4" height="7" fill="#00ffa6"/><rect x="860" y="755" width="4" height="7" fill="#00ff8c"/><rect x="864" y="755" width="8" height="7" fill="#00ff73"/><rect x="872" y="755" width="12" height="7" fill="#00ff80"/><rect x="884" y="755" width="66" height="7" fill="#00ff73"/><rect x="950" y="755" width="8" height="7" fill="#00ff66"/><rect x="958" y="755" width="50" height="7" fill="#00ff73"/><rect x="1008" y="755" width="4" height="7" fill="#00ff80"/><rect x="1012" y="755" width="58" height="7" fill="#00ff73"/><rect x="1070" y="755" width="8" height="7" fill="#00ff66"/><rect x="1078" y="755" width="29" height="7" fill="#00ff80"/><rect x="1107" y="755" width="1" height="7" fill="#00ff99"/><rect x="856" y="762" width="4" height="8" fill="#000dff"/><rect x="860" y="762" width="4" height="8" fill="#0026ff"/><rect x="864" y="762" width="4" height="8" fill="#0040ff"/><rect x="868" y="762" width="41" height="8" fill="#004cff"/><rect x="909" y="762" width="21" height="8" fill="#0040ff"/><rect x="930" y="762" width="8" height="8" fill="#004cff"/><rect x="938" y="762" width="29" height="8" fill="#0040ff"/><rect x="967" y="762" width="8" height="8" fill="#004cff"/><rect x="975" y="762" width="4" height="8" fill="#0040ff"/><rect x="979" y="762" width="12" height="8" fill="#0026ff"/><rect x="991" y="762" width="25" height="8" fill="#0040ff"/><rect x="1016" y="762" width="4" height="8" fill="#0033ff"/><rect x="1020" y="762" width="33" height="8" fill="#0040ff"/><rect x="1053" y="762" width="33" height="8" fill="#0033ff"/><rect x="1086" y="762" width="21" height="8" fill="#0040ff"/><rect x="1107" y="762" width="1" height="8" fill="#001aff"/></g><rect x="78" y="582" width="253" height="6" fill="#000"/><rect x="855" y="597.1" width="253" height="5.6" fill="#000"/><rect x="76" y="769.6" width="1036" height="1.2" fill="#000"/><line x1="76.4" y1="531" x2="76.4" y2="537" stroke="#222" stroke-width="1.2"/><line x1="179.9" y1="531" x2="179.9" y2="537" stroke="#222" stroke-width="1.2"/><line x1="283.5" y1="531" x2="283.5" y2="537" stroke="#222" stroke-width="1.2"/><line x1="387.0" y1="531" x2="387.0" y2="537" stroke="#222" stroke-width="1.2"/><line x1="490.6" y1="531" x2="490.6" y2="537" stroke="#222" stroke-width="1.2"/><line x1="594.1" y1="531" x2="594.1" y2="537" stroke="#222" stroke-width="1.2"/><line x1="697.6" y1="531" x2="697.6" y2="537" stroke="#222" stroke-width="1.2"/><line x1="801.2" y1="531" x2="801.2" y2="537" stroke="#222" stroke-width="1.2"/><line x1="904.7" y1="531" x2="904.7" y2="537" stroke="#222" stroke-width="1.2"/><line x1="1008.3" y1="531" x2="1008.3" y2="537" stroke="#222" stroke-width="1.2"/><line x1="1111.8" y1="531" x2="1111.8" y2="537" stroke="#222" stroke-width="1.2"/><line x1="70" y1="537.2" x2="76.5" y2="537.2" stroke="#222" stroke-width="1.2"/><line x1="70" y1="570.6" x2="76.5" y2="570.6" stroke="#222" stroke-width="1.2"/><line x1="70" y1="603.9" x2="76.5" y2="603.9" stroke="#222" stroke-width="1.2"/><line x1="70" y1="637.2" x2="76.5" y2="637.2" stroke="#222" stroke-width="1.2"/><line x1="70" y1="670.6" x2="76.5" y2="670.6" stroke="#222" stroke-width="1.2"/><line x1="70" y1="704.0" x2="76.5" y2="704.0" stroke="#222" stroke-width="1.2"/><line x1="70" y1="737.3" x2="76.5" y2="737.3" stroke="#222" stroke-width="1.2"/><line x1="70" y1="770.7" x2="76.5" y2="770.7" stroke="#222" stroke-width="1.2"/><text transform="translate(57,654.5) rotate(-90)" class="ttl" text-anchor="middle" textLength="32.5" lengthAdjust="spacing">Time</text><rect x="83.50" y="827.5" width="13.19" height="10.5" fill="#0006ff"/><rect x="96.39" y="827.5" width="13.19" height="10.5" fill="#0013ff"/><rect x="109.28" y="827.5" width="13.19" height="10.5" fill="#0020ff"/><rect x="122.17" y="827.5" width="13.19" height="10.5" fill="#002dff"/><rect x="135.06" y="827.5" width="13.19" height="10.5" fill="#0039ff"/><rect x="147.95" y="827.5" width="13.19" height="10.5" fill="#0046ff"/><rect x="160.84" y="827.5" width="13.19" height="10.5" fill="#0053ff"/><rect x="173.73" y="827.5" width="13.19" height="10.5" fill="#0060ff"/><rect x="186.62" y="827.5" width="13.19" height="10.5" fill="#006cff"/><rect x="199.51" y="827.5" width="13.19" height="10.5" fill="#0079ff"/><rect x="212.40" y="827.5" width="13.19" height="10.5" fill="#0086ff"/><rect x="225.29" y="827.5" width="13.19" height="10.5" fill="#0093ff"/><rect x="238.18" y="827.5" width="13.19" height="10.5" fill="#009fff"/><rect x="251.07" y="827.5" width="13.19" height="10.5" fill="#00acff"/><rect x="263.96" y="827.5" width="13.19" height="10.5" fill="#00b9ff"/><rect x="276.85" y="827.5" width="13.19" height="10.5" fill="#00c6ff"/><rect x="289.74" y="827.5" width="13.19" height="10.5" fill="#00d2ff"/><rect x="302.63" y="827.5" width="13.19" height="10.5" fill="#00dfff"/><rect x="315.52" y="827.5" width="13.19" height="10.5" fill="#00ecff"/><rect x="328.41" y="827.5" width="13.19" height="10.5" fill="#00f9ff"/><rect x="341.30" y="827.5" width="13.19" height="10.5" fill="#00fff9"/><rect x="354.19" y="827.5" width="13.19" height="10.5" fill="#00ffec"/><rect x="367.08" y="827.5" width="13.19" height="10.5" fill="#00ffdf"/><rect x="379.97" y="827.5" width="13.19" height="10.5" fill="#00ffd2"/><rect x="392.86" y="827.5" width="13.19" height="10.5" fill="#00ffc6"/><rect x="405.75" y="827.5" width="13.19" height="10.5" fill="#00ffb9"/><rect x="418.64" y="827.5" width="13.19" height="10.5" fill="#00ffac"/><rect x="431.53" y="827.5" width="13.19" height="10.5" fill="#00ff9f"/><rect x="444.42" y="827.5" width="13.19" height="10.5" fill="#00ff93"/><rect x="457.31" y="827.5" width="13.19" height="10.5" fill="#00ff86"/><rect x="470.20" y="827.5" width="13.19" height="10.5" fill="#00ff79"/><rect x="483.09" y="827.5" width="13.19" height="10.5" fill="#00ff6c"/><rect x="495.98" y="827.5" width="13.19" height="10.5" fill="#00ff60"/><rect x="508.87" y="827.5" width="13.19" height="10.5" fill="#00ff53"/><rect x="521.76" y="827.5" width="13.19" height="10.5" fill="#00ff46"/><rect x="534.65" y="827.5" width="13.19" height="10.5" fill="#00ff39"/><rect x="547.54" y="827.5" width="13.19" height="10.5" fill="#00ff2d"/><rect x="560.43" y="827.5" width="13.19" height="10.5" fill="#00ff20"/><rect x="573.32" y="827.5" width="13.19" height="10.5" fill="#00ff13"/><rect x="586.21" y="827.5" width="13.19" height="10.5" fill="#00ff06"/><rect x="599.10" y="827.5" width="13.19" height="10.5" fill="#06ff00"/><rect x="611.99" y="827.5" width="13.19" height="10.5" fill="#13ff00"/><rect x="624.88" y="827.5" width="13.19" height="10.5" fill="#20ff00"/><rect x="637.77" y="827.5" width="13.19" height="10.5" fill="#2dff00"/><rect x="650.66" y="827.5" width="13.19" height="10.5" fill="#39ff00"/><rect x="663.55" y="827.5" width="13.19" height="10.5" fill="#46ff00"/><rect x="676.44" y="827.5" width="13.19" height="10.5" fill="#53ff00"/><rect x="689.33" y="827.5" width="13.19" height="10.5" fill="#60ff00"/><rect x="702.22" y="827.5" width="13.19" height="10.5" fill="#6cff00"/><rect x="715.11" y="827.5" width="13.19" height="10.5" fill="#79ff00"/><rect x="728.00" y="827.5" width="13.19" height="10.5" fill="#86ff00"/><rect x="740.89" y="827.5" width="13.19" height="10.5" fill="#93ff00"/><rect x="753.78" y="827.5" width="13.19" height="10.5" fill="#9fff00"/><rect x="766.67" y="827.5" width="13.19" height="10.5" fill="#acff00"/><rect x="779.56" y="827.5" width="13.19" height="10.5" fill="#b9ff00"/><rect x="792.45" y="827.5" width="13.19" height="10.5" fill="#c6ff00"/><rect x="805.34" y="827.5" width="13.19" height="10.5" fill="#d2ff00"/><rect x="818.23" y="827.5" width="13.19" height="10.5" fill="#dfff00"/><rect x="831.12" y="827.5" width="13.19" height="10.5" fill="#ecff00"/><rect x="844.01" y="827.5" width="13.19" height="10.5" fill="#f9ff00"/><rect x="856.90" y="827.5" width="13.19" height="10.5" fill="#fff900"/><rect x="869.79" y="827.5" width="13.19" height="10.5" fill="#ffec00"/><rect x="882.68" y="827.5" width="13.19" height="10.5" fill="#ffdf00"/><rect x="895.57" y="827.5" width="13.19" height="10.5" fill="#ffd200"/><rect x="908.46" y="827.5" width="13.19" height="10.5" fill="#ffc600"/><rect x="921.35" y="827.5" width="13.19" height="10.5" fill="#ffb900"/><rect x="934.24" y="827.5" width="13.19" height="10.5" fill="#ffac00"/><rect x="947.13" y="827.5" width="13.19" height="10.5" fill="#ff9f00"/><rect x="960.02" y="827.5" width="13.19" height="10.5" fill="#ff9300"/><rect x="972.91" y="827.5" width="13.19" height="10.5" fill="#ff8600"/><rect x="985.80" y="827.5" width="13.19" height="10.5" fill="#ff7900"/><rect x="998.69" y="827.5" width="13.19" height="10.5" fill="#ff6c00"/><rect x="1011.58" y="827.5" width="13.19" height="10.5" fill="#ff6000"/><rect x="1024.47" y="827.5" width="13.19" height="10.5" fill="#ff5300"/><rect x="1037.36" y="827.5" width="13.19" height="10.5" fill="#ff4600"/><rect x="1050.25" y="827.5" width="13.19" height="10.5" fill="#ff3900"/><rect x="1063.14" y="827.5" width="13.19" height="10.5" fill="#ff2d00"/><rect x="1076.03" y="827.5" width="13.19" height="10.5" fill="#ff2000"/><rect x="1088.92" y="827.5" width="13.19" height="10.5" fill="#ff1300"/><rect x="1101.81" y="827.5" width="13.19" height="10.5" fill="#ff0600"/><text x="84.0" y="850.8" class="cb" text-anchor="middle">0</text><text x="211.5" y="850.8" class="cb" text-anchor="middle">10</text><text x="339.0" y="850.8" class="cb" text-anchor="middle">20</text><text x="466.5" y="850.8" class="cb" text-anchor="middle">30</text><text x="594.0" y="850.8" class="cb" text-anchor="middle">40</text><text x="721.5" y="850.8" class="cb" text-anchor="middle">50</text><text x="849.0" y="850.8" class="cb" text-anchor="middle">60</text><text x="976.5" y="850.8" class="cb" text-anchor="middle">70</text><text x="1098.6" y="850.8" class="cb" text-anchor="middle">80</text><text x="594.7" y="876" class="ttl" text-anchor="middle" textLength="107.5" lengthAdjust="spacing">Avg Power (dB)</text></svg><div class="btn dis" style="left:19px">Start</div><div class="btn" style="left:87px">Stop</div><div class="btn" style="left:195px">Close</div></body></html>
